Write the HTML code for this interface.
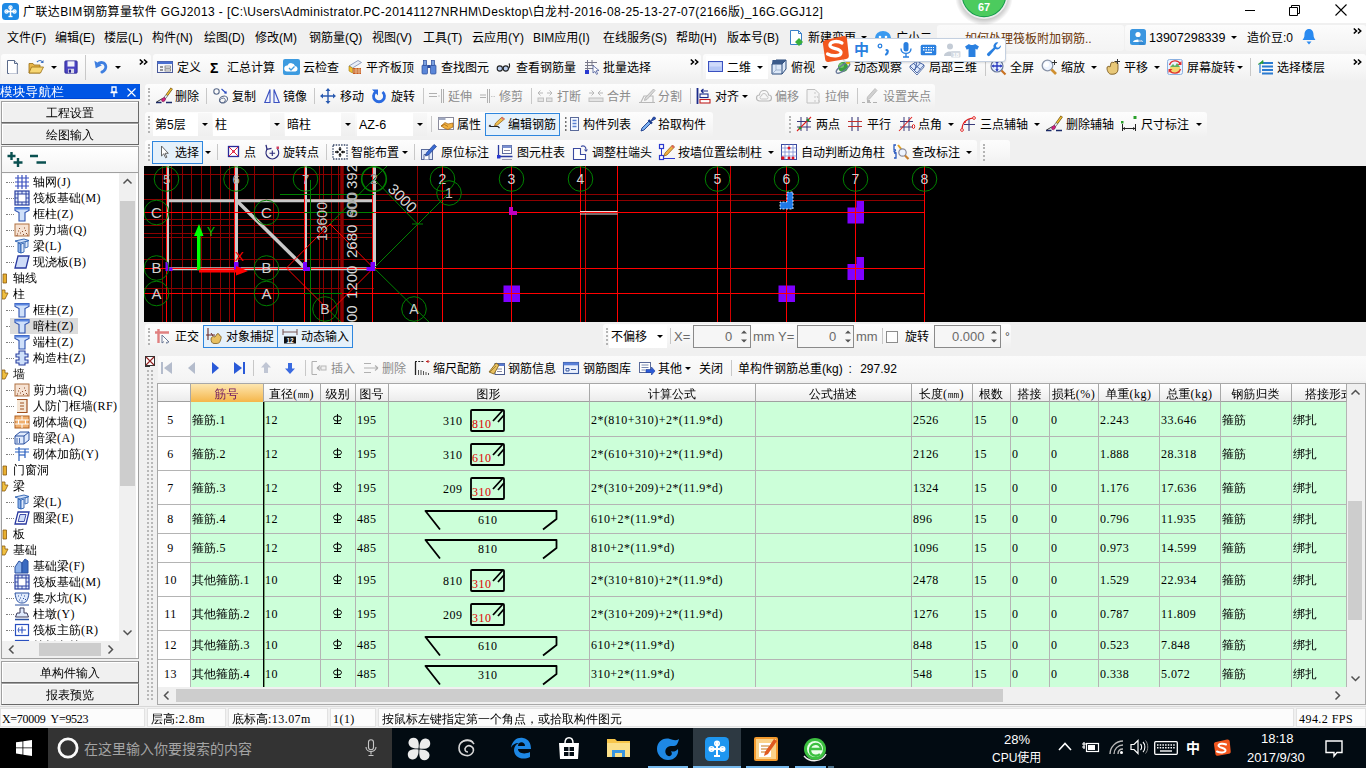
<!DOCTYPE html>
<html lang="zh-CN"><head><meta charset="utf-8"><title>GGJ2013</title>
<style>
html,body{margin:0;padding:0;width:1366px;height:768px;overflow:hidden;background:#f0f0f0;}
body{position:relative;font-family:"Liberation Sans","Noto Sans CJK SC",sans-serif;font-size:12px;color:#000;}
.a{position:absolute;}
.t{position:absolute;white-space:nowrap;line-height:16px;height:16px;font-size:12px;}
.s{position:absolute;white-space:nowrap;line-height:14px;height:14px;font-size:12px;font-family:"Liberation Serif","WenQuanYi Zen Hei","Noto Sans CJK SC",serif;}
.g{color:#8c8c8c;}
.l{letter-spacing:.45px;}
svg{position:absolute;overflow:visible;}
.tb{position:absolute;background:linear-gradient(#fdfdfd,#f7f7f7 55%,#f0f0f0);border-radius:3px;}
.sep{position:absolute;width:1px;background:#c8c8c8;}
.grip{position:absolute;width:2px;border-left:2px dotted #b4b4b4;}
.arr{position:absolute;width:0;height:0;border-left:3px solid transparent;border-right:3px solid transparent;border-top:3px solid #000;}
.btnsel{position:absolute;background:#e5f1fb;border:1px solid #2e86de;box-sizing:border-box;}
</style></head>
<body>
<div class="a" style="left:0px;top:0px;width:1366px;height:23px;background:#fff;"></div>
<svg style="left:2px;top:3px" width="17" height="17" viewBox="0 0 17 17"><rect x="0" y="0" width="17" height="17" rx="3.500" fill="#1e8ae6"/><path d="M8.500 3.500v10M3.500 8.500h10" stroke="#fff" stroke-width="1.500"/><circle cx="8.500" cy="4.500" r="1.600" fill="none" stroke="#fff" stroke-width="1.200"/><circle cx="4.500" cy="8.500" r="1.600" fill="none" stroke="#fff" stroke-width="1.200"/><circle cx="12.500" cy="8.500" r="1.600" fill="none" stroke="#fff" stroke-width="1.200"/><path d="M6.500 13.500h4" stroke="#fff" stroke-width="1.400"/></svg>
<span class="t" id="title" style="left:23px;top:3px;font-size:12px;line-height:18px;height:18px;letter-spacing:.4px">广联达BIM钢筋算量软件 GGJ2013 - [C:\Users\Administrator.PC-20141127NRHM\Desktop\白龙村-2016-08-25-13-27-07(2166版)_16G.GGJ12]</span>
<svg style="left:1240px;top:2px" width="120" height="18" viewBox="0 0 120 18"><path d="M5 8.500h10" stroke="#000" stroke-width="1"/><path d="M49.500 5.500h8v8h-8zM51.500 5.500v-2h8v8h-2" fill="none" stroke="#000" stroke-width="1"/><path d="M95.500 2.500l11 11M106.500 2.500l-11 11" stroke="#000" stroke-width="1.100"/></svg>
<div class="a" style="left:0px;top:23px;width:1366px;height:29px;background:#f0f0f0;"></div>
<span class="t" style="left:7px;top:30px;">文件(F)</span>
<span class="t" style="left:55px;top:30px;">编辑(E)</span>
<span class="t" style="left:104px;top:30px;">楼层(L)</span>
<span class="t" style="left:152px;top:30px;">构件(N)</span>
<span class="t" style="left:204px;top:30px;">绘图(D)</span>
<span class="t" style="left:255px;top:30px;">修改(M)</span>
<span class="t" style="left:309px;top:30px;">钢筋量(Q)</span>
<span class="t" style="left:372px;top:30px;">视图(V)</span>
<span class="t" style="left:423px;top:30px;">工具(T)</span>
<span class="t" style="left:472px;top:30px;">云应用(Y)</span>
<span class="t" style="left:533px;top:30px;">BIM应用(I)</span>
<span class="t" style="left:603px;top:30px;">在线服务(S)</span>
<span class="t" style="left:676px;top:30px;">帮助(H)</span>
<span class="t" style="left:727px;top:30px;">版本号(B)</span>
<svg style="left:789px;top:30px" width="16" height="16" viewBox="0 0 16 16"><path d="M1.500 .5h8l3 3v11h-11z" fill="#fff" stroke="#3a80c8"/><path d="M9.500 .5v3h3" fill="none" stroke="#3a80c8"/><path d="M10 8l4 4l-4 4l-4-4z" fill="#3ab03a"/></svg>
<span class="t" style="left:808px;top:30px;">新建变更</span>
<div class="arr" style="left:861px;top:36px;"></div>
<svg style="left:874px;top:30px" width="18" height="16" viewBox="0 0 18 16"><ellipse cx="9" cy="8" rx="8" ry="7" fill="#3a9af0"/><circle cx="6" cy="7" r="1.300" fill="#fff"/><circle cx="12" cy="7" r="1.300" fill="#fff"/></svg>
<span class="t" style="left:896px;top:30px;">广小二</span>
<div class="a" style="left:937px;top:25px;width:187px;height:26px;background:linear-gradient(#fafafa,#f4f4f4);border-radius:3px;"></div>
<span class="t" style="left:965px;top:31px;color:#6a3406;">如何处理筏板附加钢筋..</span>
<div class="a" style="left:1125px;top:25px;width:241px;height:26px;background:linear-gradient(#fcfcfc,#f3f3f3);border-radius:3px;"></div>
<svg style="left:1130px;top:29px" width="16" height="16" viewBox="0 0 16 16"><rect width="16" height="16" rx="2.500" fill="#3a96e0"/><circle cx="8" cy="5.500" r="2.600" fill="#fff"/><path d="M3 13c0-3.500 10-3.500 10 0z" fill="#fff"/><path d="M8 8.500l8 7.500H9z" fill="#2a78c0" opacity=".5"/></svg>
<span class="t" style="left:1149px;top:30px;font-size:12.500px;">13907298339</span>
<div class="arr" style="left:1231px;top:36px;"></div>
<span class="t" style="left:1247px;top:30px;">造价豆:0</span>
<svg style="left:1302px;top:29px" width="14" height="17" viewBox="0 0 14 17"><path d="M7 0c3 0 4.500 2.500 4.500 5.500c0 3 1 4 2 5.500H.5c1-1.500 2-2.500 2-5.500C2.500 2.500 4 0 7 0z" fill="#2a8af0"/><path d="M4.500 12.500h5l-2.500 3z" fill="#2a8af0"/></svg>
<svg style="left:1353px;top:28px" width="9" height="6" viewBox="0 0 9 6"><path d="M.8 .5L3.500 3L.8 5.500M5 .5L7.700 3L5 5.500" fill="none" stroke="#000" stroke-width="1.600"/></svg>
<div class="tb" style="left:1px;top:54px;width:150px;height:27px;"></div>
<svg style="left:5px;top:59px" width="16" height="16" viewBox="0 0 16 16"><path d="M2.5 1.5h7l3 3v10h-10z" fill="#fff" stroke="#5a6a8a"/><path d="M9.5 1.5v3h3" fill="#dfe6f2" stroke="#5a6a8a"/><path d="M12 6v8.5H4" fill="none" stroke="#c2c8d6"/></svg>
<svg style="left:28px;top:59px" width="16" height="16" viewBox="0 0 16 16"><path d="M1 4.5h4l1 1.5h6v8H1z" fill="#e8b64a" stroke="#9a6f14" stroke-width=".8"/><path d="M3.5 8h12l-3 6H1z" fill="#f7d774" stroke="#9a6f14" stroke-width=".8"/><path d="M9 3c2-2 4-2 5.5 0" fill="none" stroke="#3a6fc0" stroke-width="1.2"/><path d="M15.5 1v3h-3z" fill="#3a6fc0"/></svg>
<div class="arr" style="left:51px;top:66px;"></div>
<svg style="left:64px;top:60px" width="14" height="14" viewBox="0 0 16 16"><rect x="1" y="1" width="14" height="14" rx="1" fill="#4a43c2" stroke="#2b2790"/><rect x="4" y="1.5" width="8" height="6" fill="#f2f2fa"/><rect x="4.5" y="10" width="7" height="5" fill="#d6d6e8"/><rect x="5.5" y="11" width="2.5" height="3.5" fill="#2b2790"/></svg>
<div class="sep" style="left:85px;top:55px;height:25px"></div>
<svg style="left:94px;top:59px" width="14" height="14" viewBox="0 0 16 16"><path d="M4 6.500c2.500-4 9-3 9.500 2c.3 3-1.500 5-4.500 6.500" fill="none" stroke="#3f7fe0" stroke-width="3.200" stroke-linecap="round"/><path d="M.5 2l1.500 8.500l7-3.500z" fill="#3f7fe0"/></svg>
<div class="arr" style="left:115px;top:66px;"></div>
<svg style="left:139px;top:59px" width="9" height="6" viewBox="0 0 9 6"><path d="M.8 .5L3.500 3L.8 5.500M5 .5L7.700 3L5 5.500" fill="none" stroke="#000" stroke-width="1.600"/></svg>
<div class="tb" style="left:153px;top:54px;width:548px;height:27px;"></div>
<svg style="left:157px;top:59px" width="16" height="16" viewBox="0 0 16 16"><rect x=".5" y="2.500" width="15" height="11" fill="#f4f6fb" stroke="#4a5a9a"/><rect x=".5" y="2.500" width="15" height="2.500" fill="#4a6fd0"/><path d="M3 8h3M3 11h3" stroke="#333" stroke-width="1.200"/><rect x="8" y="7" width="5.500" height="2" fill="#fff" stroke="#666" stroke-width=".7"/><rect x="8" y="10" width="5.500" height="2" fill="#fff" stroke="#666" stroke-width=".7"/></svg><span class="t" style="left:177px;top:60px;">定义</span>
<span class="t" style="left:210px;top:60px;font-weight:bold;font-size:14px;">Σ</span>
<span class="t" style="left:227px;top:60px;">汇总计算</span>
<svg style="left:283px;top:59px" width="17" height="16" viewBox="0 0 17 16"><rect x="0" y="0" width="17" height="16" rx="2" fill="#3d9be0"/><path d="M4 12.500a3 3 0 0 1 .5-6a4 4 0 0 1 7.500.5a2.800 2.800 0 0 1 .5 5.500z" fill="#fff"/><path d="M6 9l2 2l3.500-3.500" fill="none" stroke="#3d9be0" stroke-width="1.300"/></svg>
<span class="t" style="left:303px;top:60px;">云检查</span>
<svg style="left:347px;top:59px" width="16" height="16" viewBox="0 0 16 16"><path d="M2 7l9-5.500l3.500 2L5.500 9z" fill="#e9eef8" stroke="#7a8ab0" stroke-width=".8"/><path d="M2 7l3.500 2V14L2 12z" fill="#f2c030" stroke="#a07810" stroke-width=".6"/><rect x="6" y="9" width="8" height="6" fill="#c85a20"/><path d="M6 11h8M6 13h8M9 9v6M12 9v6" stroke="#f4e0c0" stroke-width=".6"/></svg><span class="t" style="left:366px;top:60px;">平齐板顶</span>
<svg style="left:421px;top:59px" width="16" height="16" viewBox="0 0 16 16"><rect x="1" y="6" width="5.500" height="9" rx="1" fill="#5a86d8" stroke="#2a4a9a" stroke-width=".7"/><rect x="9.500" y="6" width="5.500" height="9" rx="1" fill="#5a86d8" stroke="#2a4a9a" stroke-width=".7"/><rect x="2.500" y="1.500" width="3" height="5" fill="#7aa0e0" stroke="#2a4a9a" stroke-width=".7"/><rect x="10.500" y="1.500" width="3" height="5" fill="#7aa0e0" stroke="#2a4a9a" stroke-width=".7"/><rect x="6.500" y="6" width="3" height="3" fill="#2a4a9a"/></svg><span class="t" style="left:441px;top:60px;">查找图元</span>
<svg style="left:496px;top:59px" width="16" height="16" viewBox="0 0 16 16"><circle cx="3.800" cy="9.500" r="2.600" fill="#bcd0f0" stroke="#222" stroke-width="1.100"/><circle cx="9.800" cy="9.500" r="2.600" fill="#bcd0f0" stroke="#222" stroke-width="1.100"/><path d="M6.400 9.500h.8M12.400 9.500c1.500-.5 1.500-4 .5-5" fill="none" stroke="#222" stroke-width="1.100"/></svg><span class="t" style="left:516px;top:60px;">查看钢筋量</span>
<svg style="left:584px;top:59px" width="16" height="16" viewBox="0 0 16 16"><path d="M1 3.500h12M1 6.500h9M1 9.500h8M3.500 1v11M8 1v6" stroke="#7a7a8a" stroke-width="1" fill="none"/><rect x="1" y="11" width="4" height="4" fill="#2a3ad0"/><path d="M9 6.500l6 5l-2.800.3l1.500 3l-1.200.6l-1.500-3L9 14z" fill="#fff" stroke="#4a5a9a" stroke-width=".8"/></svg><span class="t" style="left:603px;top:60px;">批量选择</span>
<svg style="left:690px;top:59px" width="9" height="6" viewBox="0 0 9 6"><path d="M.8 .5L3.500 3L.8 5.500M5 .5L7.700 3L5 5.500" fill="none" stroke="#000" stroke-width="1.600"/></svg>
<div class="tb" style="left:703px;top:54px;width:663px;height:27px;"></div>
<div class="a" style="left:706px;top:56px;width:62px;height:23px;background:#fff;"></div>
<svg style="left:708px;top:59px" width="16" height="16" viewBox="0 0 16 16"><rect x=".5" y="2.500" width="14" height="10" fill="#b4c6f6" stroke="#3a50c0"/><rect x="1.500" y="3.500" width="12" height="4" fill="#cfdafa"/></svg><span class="t" style="left:727px;top:60px;">二维</span>
<div class="arr" style="left:757px;top:66px;"></div>
<svg style="left:771px;top:59px" width="16" height="16" viewBox="0 0 16 16"><path d="M1 5l4-4h10v9l-4 5H1z" fill="#dce8f8" stroke="#2a4a7a"/><path d="M1 5h10v10M11 5l4-4" fill="none" stroke="#2a4a7a"/><path d="M1.500 1h13.500l-4 4H1z" fill="#3a5a8a"/><path d="M5 5.500v5.500h6M5 11l-3.500 3.500" stroke="#8aa0c0" stroke-width=".7" fill="none"/></svg><span class="t" style="left:791px;top:60px;">俯视</span>
<div class="arr" style="left:822px;top:66px;"></div>
<svg style="left:835px;top:59px" width="16" height="16" viewBox="0 0 16 16"><circle cx="8" cy="8" r="5" fill="#3aa040"/><circle cx="6.500" cy="6.500" r="2.500" fill="#7ad070" opacity=".8"/><ellipse cx="8" cy="9" rx="8" ry="2.800" transform="rotate(-35 8 9)" fill="none" stroke="#6a7a9a" stroke-width="1.300"/><circle cx="13" cy="3" r="2.300" fill="#e8c020"/></svg><span class="t" style="left:854px;top:60px;">动态观察</span>
<svg style="left:909px;top:59px" width="16" height="16" viewBox="0 0 16 16"><path d="M1 7l7-5l7 4l-7 8z" fill="#dfeafc" stroke="#3a5aa0" stroke-width=".9"/><path d="M4.500 4.500l7 6M8 2.500l-2 8.500M11.500 4l-6.500 7" stroke="#3a5aa0" stroke-width=".9" fill="none"/><path d="M1 7v2l7 7l7-8V6" fill="none" stroke="#3a5aa0" stroke-width=".8"/></svg><span class="t" style="left:929px;top:60px;">局部三维</span>
<div class="sep" style="left:985px;top:58px;height:18px"></div>
<svg style="left:990px;top:59px" width="16" height="16" viewBox="0 0 16 16"><circle cx="7" cy="7" r="6" fill="#e6f0ff" stroke="#6a7a9a" stroke-width="1.200"/><path d="M7 2.500v9M2.500 7h9" stroke="#2a3ac0" stroke-width="1.300"/><path d="M7 1.500l1.800 2.200H5.200zM7 12.500l1.800-2.200H5.200zM1.500 7l2.200-1.800v3.600zM12.500 7l-2.200-1.800v3.600z" fill="#2a3ac0"/><path d="M11.500 11.500l4 4" stroke="#c87020" stroke-width="2.200"/></svg><span class="t" style="left:1010px;top:60px;">全屏</span>
<svg style="left:1041px;top:59px" width="16" height="16" viewBox="0 0 16 16"><circle cx="6.500" cy="6.500" r="5.300" fill="#eef4ff" stroke="#8a94a8" stroke-width="1.300"/><circle cx="5.500" cy="5.500" r="2.500" fill="#fff"/><path d="M10.500 10.500l4.500 4.500" stroke="#d09030" stroke-width="2.600"/><path d="M13.500 1v5M11 3.500h5" stroke="#333" stroke-width="1"/></svg><span class="t" style="left:1061px;top:60px;">缩放</span>
<div class="arr" style="left:1091px;top:66px;"></div>
<svg style="left:1105px;top:59px" width="16" height="16" viewBox="0 0 16 16"><path d="M2 9c0-2 2-2 3-1l1-4c.5-1.200 2-1 2 0l1-1c1-.8 2 0 2 1c1-.5 2 .2 2 1.200v5c0 3-2 5-5 5H6c-2 0-4-3-4-6z" fill="#e8c878" stroke="#7a5a20" stroke-width=".9"/><path d="M12.500 0v5M10 2.500h5" stroke="#333" stroke-width="1"/></svg><span class="t" style="left:1124px;top:60px;">平移</span>
<div class="arr" style="left:1154px;top:66px;"></div>
<svg style="left:1167px;top:59px" width="16" height="16" viewBox="0 0 16 16"><rect x=".5" y=".5" width="15" height="15" rx="2" fill="#eaf3ff" stroke="#8ab0e0"/><rect x="3" y="8" width="10" height="6" fill="#f0d870"/><path d="M3 8l3-3l2 2l2-3l3 4z" fill="#60b060"/><path d="M2.500 6a6 6 0 0 1 11-1M13.500 10a6 6 0 0 1-11 1" fill="none" stroke="#e03030" stroke-width="1.400"/><path d="M14.500 2v4h-4zM1.500 14v-4h4z" fill="#e03030"/></svg><span class="t" style="left:1187px;top:60px;">屏幕旋转</span>
<div class="arr" style="left:1237px;top:66px;"></div>
<div class="sep" style="left:1250px;top:58px;height:18px"></div>
<svg style="left:1258px;top:59px" width="16" height="16" viewBox="0 0 16 16"><path d="M4 4h11M4 7.500h11M4 11h11M4 14.500h11" stroke="#2a7ad0" stroke-width="1.800"/><path d="M0 5.500l5-4v3" fill="#2a9a3a" stroke="#2a9a3a" stroke-width=".8"/><path d="M2 5v9" stroke="#2a7ad0" stroke-width="1.200"/></svg><span class="t" style="left:1277px;top:60px;">选择楼层</span>
<svg style="left:1353px;top:59px" width="9" height="6" viewBox="0 0 9 6"><path d="M.8 .5L3.500 3L.8 5.500M5 .5L7.700 3L5 5.500" fill="none" stroke="#000" stroke-width="1.600"/></svg>
<div class="tb" style="left:145px;top:84px;width:790px;height:25px;"></div>
<div class="grip" style="left:148px;top:88px;height:17px"></div>
<svg style="left:156px;top:88px" width="16" height="16" viewBox="0 0 16 16"><path d="M0 14.500h5.500M10 14.500h6" stroke="#1a2a6a" stroke-width="1.300"/><path d="M.5 14l6-3.500" stroke="#222" stroke-width=".9"/><path d="M15.800 .3L10.800 7.200" stroke="#6a4a10" stroke-width="2.600"/><path d="M15.600 .6L11 6.900" stroke="#f0c030" stroke-width="1.500"/><path d="M10.800 7.200L8.800 10" stroke="#555" stroke-width="2.600"/><path d="M10.700 7.400L9 9.800" stroke="#f4f4f4" stroke-width="1.500"/><ellipse cx="7.600" cy="11.600" rx="2.300" ry="1.700" transform="rotate(-50 7.600 11.600)" fill="#d02080" stroke="#601040" stroke-width=".5"/></svg><span class="t" style="left:175px;top:89px;">删除</span>
<div class="sep" style="left:206px;top:88px;height:16px"></div>
<svg style="left:213px;top:88px" width="16" height="16" viewBox="0 0 16 16"><circle cx="3.500" cy="3.500" r="2.700" fill="none" stroke="#5a6a8a" stroke-width="1.100"/><ellipse cx="10.500" cy="11.500" rx="4.200" ry="3.200" fill="none" stroke="#5a6a8a" stroke-width="1.100" transform="rotate(-25 10.500 11.500)"/><ellipse cx="9.500" cy="12.500" rx="3" ry="2.200" fill="none" stroke="#5a6a8a" stroke-width=".8" transform="rotate(-25 9.500 12.500)"/><path d="M8.500 1l4.500 4" stroke="#2a4ac0" stroke-width="1.100"/><path d="M13.800 5.800l-3-.5l2.500-2.500z" fill="#2a4ac0"/></svg><span class="t" style="left:232px;top:89px;">复制</span>
<svg style="left:264px;top:88px" width="16" height="16" viewBox="0 0 16 16"><path d="M6 1.500V14.500H.8zM10 1.500V14.500h5.200z" fill="#eef2ff" stroke="#3a50c0" stroke-width="1.100"/></svg><span class="t" style="left:283px;top:89px;">镜像</span>
<div class="sep" style="left:314px;top:88px;height:16px"></div>
<svg style="left:320px;top:88px" width="16" height="16" viewBox="0 0 16 16"><path d="M8 1v14M1 8h14" stroke="#2a5ab0" stroke-width="1.400"/><path d="M8 0l2.500 3h-5zM8 16l2.500-3h-5zM0 8l3-2.500v5zM16 8l-3-2.500v5z" fill="#2a5ab0"/></svg><span class="t" style="left:340px;top:89px;">移动</span>
<svg style="left:371px;top:88px" width="16" height="16" viewBox="0 0 16 16"><path d="M4.500 4a5.500 5.500 0 1 0 7 0" fill="none" stroke="#2a6ae0" stroke-width="2.800"/><path d="M1 1.500h6v6z" fill="#2a6ae0"/></svg><span class="t" style="left:391px;top:89px;">旋转</span>
<div class="sep" style="left:423px;top:88px;height:16px"></div>
<svg style="left:428px;top:88px" width="16" height="16" viewBox="0 0 16 16"><path d="M1 5.500h8M1 8.500h8" stroke="#b0b0b0" stroke-width="1.200"/><path d="M10 8h2" stroke="#c8c8c8"/><path d="M13.500 1v14M15.500 1v14" stroke="#b0b0b0" stroke-width="1"/></svg><span class="t" style="left:448px;top:89px;color:#8c8c8c;">延伸</span>
<svg style="left:480px;top:88px" width="16" height="16" viewBox="0 0 16 16"><path d="M0 7h6M0 9.500h6" stroke="#b0b0b0" stroke-width="1.200"/><path d="M7.500 1v14M9.500 1v14" stroke="#b0b0b0" stroke-width="1"/><path d="M11 8.500h4" stroke="#c8c8c8" stroke-dasharray="1.500 1"/></svg><span class="t" style="left:499px;top:89px;color:#8c8c8c;">修剪</span>
<div class="sep" style="left:531px;top:88px;height:16px"></div>
<svg style="left:537px;top:88px" width="16" height="16" viewBox="0 0 16 16"><path d="M1 5h5M10 5h5" stroke="#b8b8b8" stroke-width="1.200"/><path d="M1 5l2.500-2.500M1 5l2.500 2.500M15 5l-2.500-2.500M15 5l-2.500 2.500" stroke="#b8b8b8" stroke-width="1"/><rect x="1" y="10" width="5.500" height="3.500" fill="#e4e4e4" stroke="#c0c0c0"/><rect x="9.500" y="10" width="5.500" height="3.500" fill="#e4e4e4" stroke="#c0c0c0"/></svg><span class="t" style="left:557px;top:89px;color:#8c8c8c;">打断</span>
<svg style="left:588px;top:88px" width="16" height="16" viewBox="0 0 16 16"><path d="M1 5h4M11 5h4" stroke="#b8b8b8" stroke-width="1.200"/><path d="M6 5l-2.500-2.500M6 5l-2.500 2.500M10 5l2.500-2.500M10 5l2.500 2.500" stroke="#b8b8b8" stroke-width="1"/><rect x="1" y="10" width="14" height="3.500" fill="#e4e4e4" stroke="#c0c0c0"/></svg><span class="t" style="left:607px;top:89px;color:#8c8c8c;">合并</span>
<svg style="left:639px;top:88px" width="16" height="16" viewBox="0 0 16 16"><path d="M0 14.500h16M2 14l3-6h9v6" fill="none" stroke="#b8b8b8" stroke-width="1.100"/><path d="M14.500 1l1.500 1.500l-8 9l-2.500 1l.5-2.500z" fill="#d8d8d8" stroke="#b0b0b0" stroke-width=".8"/></svg><span class="t" style="left:658px;top:89px;color:#8c8c8c;">分割</span>
<div class="sep" style="left:690px;top:88px;height:16px"></div>
<svg style="left:696px;top:88px" width="16" height="16" viewBox="0 0 16 16"><path d="M1.500 0v16" stroke="#1a2a8a" stroke-width="1.800"/><rect x="4" y="6" width="8" height="3.500" fill="#fff" stroke="#1a2a8a" stroke-width="1.100"/><rect x="4" y="11.500" width="10" height="3.500" fill="#fff" stroke="#c02020" stroke-width="1.100"/><path d="M5 3h7M5 3l2.500-2M5 3l2.500 2" stroke="#1a2a8a" stroke-width="1.100" fill="none"/></svg><span class="t" style="left:715px;top:89px;">对齐</span>
<div class="arr" style="left:742px;top:95px;"></div>
<svg style="left:756px;top:88px" width="16" height="16" viewBox="0 0 16 16"><path d="M3.500 13a3 3 0 0 1 0-6a4.500 4.500 0 0 1 9 0a3 3 0 0 1 0 6z" fill="none" stroke="#b8b8b8" stroke-width="1.200"/><path d="M5.500 11a1.500 1.500 0 0 1 0-3a2.500 2.500 0 0 1 5 0a1.500 1.500 0 0 1 0 3z" fill="none" stroke="#c4c4c4" stroke-width="1"/></svg><span class="t" style="left:775px;top:89px;color:#8c8c8c;">偏移</span>
<svg style="left:806px;top:88px" width="16" height="16" viewBox="0 0 16 16"><path d="M1 1.500h8l4 4V15H1z" fill="#f4f4f4" stroke="#c0c0c0"/><path d="M9 4v2M9 8v2M9 12v2M11 8l1 2M12.500 12l1 2" stroke="#c8c8c8"/></svg><span class="t" style="left:825px;top:89px;color:#8c8c8c;">拉伸</span>
<div class="sep" style="left:857px;top:88px;height:16px"></div>
<svg style="left:862px;top:88px" width="16" height="16" viewBox="0 0 16 16"><path d="M13 .5l2 2l-7.500 8.500l-2.500.5l.5-2.500z" fill="#d0d0d0" stroke="#b8b8b8" stroke-width=".8"/><path d="M0 14.500h3M5 14.500h4M11 14.500h4" stroke="#b0b0b0" stroke-width="1.200"/><rect x="5" y="12" width="3" height="3" fill="#b8b8b8"/></svg><span class="t" style="left:883px;top:89px;color:#8c8c8c;">设置夹点</span>
<div class="tb" style="left:145px;top:112px;width:568px;height:25px;"></div>
<div class="grip" style="left:148px;top:116px;height:17px"></div>
<div class="a" style="left:153px;top:113px;width:59px;height:23px;background:#fff;"></div>
<div class="a" style="left:198px;top:113px;width:14px;height:23px;background:linear-gradient(#f8f8f8,#efefef);"></div>
<span class="t" style="left:155px;top:117px;">第5层</span>
<div class="arr" style="left:202px;top:123px;"></div>
<div class="a" style="left:213px;top:113px;width:70px;height:23px;background:#fff;"></div>
<div class="a" style="left:270px;top:113px;width:14px;height:23px;background:linear-gradient(#f8f8f8,#efefef);"></div>
<span class="t" style="left:215px;top:117px;">柱</span>
<div class="arr" style="left:274px;top:123px;"></div>
<div class="a" style="left:285px;top:113px;width:70px;height:23px;background:#fff;"></div>
<div class="a" style="left:341px;top:113px;width:14px;height:23px;background:linear-gradient(#f8f8f8,#efefef);"></div>
<span class="t" style="left:287px;top:117px;">暗柱</span>
<div class="arr" style="left:345px;top:123px;"></div>
<div class="a" style="left:357px;top:113px;width:70px;height:23px;background:#fff;"></div>
<div class="a" style="left:413px;top:113px;width:14px;height:23px;background:linear-gradient(#f8f8f8,#efefef);"></div>
<span class="t" style="left:359px;top:117px;font-size:12.500px;">AZ-6</span>
<div class="arr" style="left:417px;top:123px;"></div>
<div class="sep" style="left:431px;top:116px;height:16px"></div>
<svg style="left:438px;top:116px" width="16" height="16" viewBox="0 0 16 16"><rect x=".5" y="1.500" width="15" height="12" fill="#fff" stroke="#8a8a9a"/><rect x=".5" y="1.500" width="7" height="2.500" fill="#a0a8c0"/><path d="M3 10l4-3.500l3 1.500l5-1v4l-5 2.500l-3-1z" fill="#f0b040" stroke="#a06010" stroke-width=".7"/><path d="M3 10l3.500-1.500l3.500 2" fill="none" stroke="#a06010" stroke-width=".7"/></svg><span class="t" style="left:457px;top:117px;">属性</span>
<div class="btnsel" style="left:485px;top:113px;width:75px;height:23px;"></div>
<svg style="left:489px;top:116px" width="16" height="16" viewBox="0 0 16 16"><path d="M1 10.500h8l1.500 1.500" fill="none" stroke="#222" stroke-width="1.200"/><path d="M0 10.500l1.500-1.500" stroke="#222" stroke-width="1.200"/><path d="M13 1l2.500 2l-7 6l-3 1l1-2.800z" fill="#f0c050" stroke="#8a5a10" stroke-width=".7"/><path d="M13 1l2.500 2l-1.200 1l-2.500-2z" fill="#e07070"/></svg><span class="t" style="left:508px;top:117px;">编辑钢筋</span>
<svg style="left:564px;top:116px" width="16" height="16" viewBox="0 0 16 16"><rect x="6.500" y="1.500" width="8" height="13" fill="#f4f8ff" stroke="#5a6a9a"/><path d="M8.500 4.500h4M8.500 7.500h4M8.500 10.500h4" stroke="#5a80d0" stroke-width="1.300"/><path d="M1 2h3M1 6h3M1 10h3M1 14h3" stroke="#444" stroke-width="1.400" stroke-dasharray="1.500 1.500"/></svg><span class="t" style="left:583px;top:117px;">构件列表</span>
<svg style="left:640px;top:116px" width="16" height="16" viewBox="0 0 16 16"><path d="M1 15l1-3l7-7l2 2l-7 7z" fill="#7ab0f0" stroke="#1a3a8a" stroke-width=".9"/><path d="M8.500 4l3.500 3.500" stroke="#1a3a8a" stroke-width="2.200"/><path d="M10.500 5.500l3-4.500a1.800 1.800 0 0 1 2 2z" fill="#2a50b0" stroke="#1a3a8a" stroke-width=".8"/></svg><span class="t" style="left:658px;top:117px;">拾取构件</span>
<div class="tb" style="left:785px;top:112px;width:422px;height:25px;"></div>
<div class="grip" style="left:789px;top:116px;height:17px"></div>
<svg style="left:796px;top:116px" width="16" height="16" viewBox="0 0 16 16"><path d="M5 1v14M11 1v14M1 5.500h14M1 11h14" stroke="#3a3a7a" stroke-width="1"/><path d="M1 15L15 1" stroke="#e02020" stroke-width="1.100"/><circle cx="4" cy="12" r="1.500" fill="#2a8a2a"/><circle cx="12" cy="4" r="1.500" fill="#2a8a2a"/></svg><span class="t" style="left:816px;top:117px;">两点</span>
<svg style="left:847px;top:116px" width="16" height="16" viewBox="0 0 16 16"><path d="M5 1v14M11 1v14" stroke="#3a3a7a" stroke-width="1.100"/><path d="M1 5.500h14M1 10.500h14" stroke="#c03030" stroke-width="1.100"/></svg><span class="t" style="left:867px;top:117px;">平行</span>
<svg style="left:899px;top:116px" width="16" height="16" viewBox="0 0 16 16"><path d="M5 1v14M10 1v14M1 5.500h13M1 11h13" stroke="#3a3a7a" stroke-width="1"/><path d="M0 15L13 1" stroke="#e02020" stroke-width="1.100"/><ellipse cx="14.500" cy="10.500" rx="1.200" ry="2" fill="none" stroke="#e02020" stroke-width="1"/></svg><span class="t" style="left:918px;top:117px;">点角</span>
<div class="arr" style="left:948px;top:123px;"></div>
<svg style="left:960px;top:116px" width="16" height="16" viewBox="0 0 16 16"><path d="M9 3v12M4 8.500h11" stroke="#3a3a7a" stroke-width="1.100"/><path d="M2 13.500C2 7 6 3 13 2" fill="none" stroke="#e02020" stroke-width="1.100"/><circle cx="2" cy="14" r="1.400" fill="#fff" stroke="#e02020" stroke-width=".9"/><circle cx="14" cy="2" r="1.400" fill="#fff" stroke="#e02020" stroke-width=".9"/><circle cx="5" cy="6" r="1" fill="#e02020"/></svg><span class="t" style="left:980px;top:117px;">三点辅轴</span>
<div class="arr" style="left:1034px;top:123px;"></div>
<svg style="left:1046px;top:116px" width="16" height="16" viewBox="0 0 16 16"><path d="M0 14.500h5.500M10 14.500h6" stroke="#1a2a6a" stroke-width="1.300"/><path d="M.5 14l6-3.500" stroke="#222" stroke-width=".9"/><path d="M15.800 .3L10.800 7.200" stroke="#6a4a10" stroke-width="2.600"/><path d="M15.600 .6L11 6.900" stroke="#f0c030" stroke-width="1.500"/><path d="M10.800 7.200L8.800 10" stroke="#555" stroke-width="2.600"/><path d="M10.700 7.400L9 9.800" stroke="#f4f4f4" stroke-width="1.500"/><ellipse cx="7.600" cy="11.600" rx="2.300" ry="1.700" transform="rotate(-50 7.600 11.600)" fill="#d02080" stroke="#601040" stroke-width=".5"/></svg><span class="t" style="left:1066px;top:117px;">删除辅轴</span>
<svg style="left:1121px;top:116px" width="16" height="16" viewBox="0 0 16 16"><path d="M1.500 8v7M14.500 8v7M1.500 12.500h13" stroke="#222" stroke-width="1"/><path d="M1.500 12.500l2.500-1.500v3zM14.500 12.500l-2.500-1.500v3z" fill="#222"/><rect x="12.500" y="0" width="3" height="3" fill="#2aa02a"/><rect x="0" y="5" width="2.500" height="2.500" fill="#2aa02a"/></svg><span class="t" style="left:1141px;top:117px;">尺寸标注</span>
<div class="arr" style="left:1196px;top:123px;"></div>
<div class="tb" style="left:145px;top:140px;width:832px;height:25px;"></div>
<div class="tb" style="left:980px;top:140px;width:30px;height:25px;"></div>
<div class="grip" style="left:148px;top:144px;height:17px"></div>
<div class="btnsel" style="left:152px;top:141px;width:51px;height:23px;"></div>
<svg style="left:158px;top:144px" width="16" height="16" viewBox="0 0 16 16"><path d="M3.500 2v10l2.300-2.200l1.800 4l1.300-.6l-1.800-3.900h3.200z" fill="#fff" stroke="#555" stroke-width=".9"/></svg><span class="t" style="left:175px;top:145px;">选择</span>
<div class="arr" style="left:205px;top:151px;"></div>
<div class="sep" style="left:217px;top:144px;height:16px"></div>
<svg style="left:226px;top:144px" width="16" height="16" viewBox="0 0 16 16"><rect x="2.500" y="2.500" width="10" height="10" fill="#fff" stroke="#2a2a9a" stroke-width="1.300"/><path d="M3 3l9 9M12 3L3 12" stroke="#e02040" stroke-width="1"/><circle cx="7.500" cy="7.500" r="1.200" fill="#e02040"/></svg><span class="t" style="left:244px;top:145px;">点</span>
<svg style="left:264px;top:144px" width="16" height="16" viewBox="0 0 16 16"><path d="M3.200 5a6.300 6.300 0 1 0 10.300 0" fill="none" stroke="#2a2a7a" stroke-width="1.300"/><path d="M2 .8l1 4.500l4.500-1" fill="none" stroke="#2a2a7a" stroke-width="1.300"/><path d="M8.300 6.500v5.500M5.500 9.200h5.600" stroke="#2a2a7a" stroke-width="1.100"/><rect x="12.500" y="2.500" width="2.500" height="2.500" fill="#d04060"/></svg><span class="t" style="left:283px;top:145px;">旋转点</span>
<div class="sep" style="left:326px;top:144px;height:16px"></div>
<svg style="left:332px;top:144px" width="16" height="16" viewBox="0 0 16 16"><rect x="1" y="1" width="14" height="14" fill="#fff" stroke="#3a4a6a" stroke-dasharray="1.500 1.200" stroke-width="1.300"/><path d="M8 3v3.500M8 13V9.500M3 8h3.500M13 8H9.500" stroke="#111" stroke-width="1.300"/><path d="M8 7l-1.800-2.200h3.600zM8 9l-1.800 2.200h3.600zM7 8L4.800 6.200v3.600zM9 8l2.200-1.800v3.600z" fill="#111"/></svg><span class="t" style="left:351px;top:145px;">智能布置</span>
<div class="arr" style="left:402px;top:151px;"></div>
<div class="sep" style="left:414px;top:144px;height:16px"></div>
<svg style="left:421px;top:144px" width="16" height="16" viewBox="0 0 16 16"><rect x=".5" y="5.500" width="11" height="10" fill="#dfe8f8" stroke="#5a6a9a"/><path d="M3 15.500v-5h5v5" fill="#fff" stroke="#5a6a9a"/><path d="M13 .5l2.500 2l-8 8.500l-3 1l.8-3z" fill="#3a6ad0" stroke="#1a3a8a" stroke-width=".7"/></svg><span class="t" style="left:441px;top:145px;">原位标注</span>
<svg style="left:497px;top:144px" width="16" height="16" viewBox="0 0 16 16"><path d="M1.500 1v13M1.500 12.500h14" stroke="#2a3aa0" stroke-width="1.300"/><rect x="0" y="11" width="3.500" height="3.500" fill="#2a3ad0"/><rect x="5.500" y="1.500" width="9" height="8" fill="#fff" stroke="#5a6aa0"/><rect x="5.500" y="1.500" width="9" height="2.500" fill="#7a90d0"/><path d="M7 6.500h6" stroke="#8a8aa0"/><path d="M5 15.500h10" stroke="#9a9ab0"/></svg><span class="t" style="left:517px;top:145px;">图元柱表</span>
<svg style="left:572px;top:144px" width="16" height="16" viewBox="0 0 16 16"><path d="M1.500 4.500h7v6h5v5h-12z" fill="#fff" stroke="#3a4aa0" stroke-width="1.100"/><path d="M9 2.500c2.500-1.500 5 0 5 3" fill="none" stroke="#3a4aa0" stroke-width="1.100"/><path d="M12 5.500h4l-2 2.500z" fill="#3a4aa0"/></svg><span class="t" style="left:592px;top:145px;">调整柱端头</span>
<svg style="left:659px;top:144px" width="16" height="16" viewBox="0 0 16 16"><rect x=".5" y=".5" width="4" height="4" fill="#fff" stroke="#2a3ad0" stroke-width="1.200"/><rect x=".5" y="11.500" width="4" height="4" fill="#fff" stroke="#2a3ad0" stroke-width="1.200"/><path d="M2.500 5v6M5 14.500h11" stroke="#2a3ad0" stroke-width="1"/><path d="M13.500 1l2 2l-7.500 8l-3 1l1-3z" fill="#f0b040" stroke="#8a5a10" stroke-width=".7"/><path d="M13.500 1l2 2l-1.200 1.200l-2-2z" fill="#e06060"/></svg><span class="t" style="left:678px;top:145px;">按墙位置绘制柱</span>
<div class="arr" style="left:768px;top:151px;"></div>
<svg style="left:781px;top:144px" width="16" height="16" viewBox="0 0 16 16"><rect x=".5" y=".5" width="15" height="15" fill="#fff" stroke="#3a4aa0"/><path d="M4 .5v15M8 .5v15M12 .5v15M.5 4h15M.5 8h15M.5 12h15" stroke="#7a8ad0" stroke-width=".8"/><circle cx="8" cy="4" r="1.500" fill="#e01020"/><circle cx="1.800" cy="14" r="1.800" fill="#e01020"/><circle cx="8" cy="14" r="1.500" fill="#e01020"/><circle cx="12" cy="14" r="1.500" fill="#e01020"/></svg><span class="t" style="left:801px;top:145px;">自动判断边角柱</span>
<svg style="left:893px;top:144px" width="16" height="16" viewBox="0 0 16 16"><path d="M3 1H1v5h2M1 9h2v5H1" fill="none" stroke="#2a5ac0" stroke-width="1.300"/><path d="M3 6.500l-2 1.200l2 1.200" fill="none" stroke="#2a5ac0" stroke-width="1.100"/><path d="M5 1l4 5" stroke="#e0a020" stroke-width="2"/><circle cx="9.500" cy="8.500" r="3.700" fill="#eef4ff" stroke="#8a8a9a" stroke-width="1.200"/><path d="M12 11.500l3.500 3.500" stroke="#c88030" stroke-width="2.200"/></svg><span class="t" style="left:912px;top:145px;">查改标注</span>
<div class="arr" style="left:966px;top:151px;"></div>
<div class="grip" style="left:983px;top:144px;height:17px"></div>
<div class="a" style="left:843px;top:38px;width:163px;height:24px;background:#fff;border:1px solid #c4d0e0;border-radius:3px;box-sizing:border-box;box-shadow:0 1px 2px rgba(0,0,0,.12);"></div>
<svg style="left:820.500px;top:33.500px" width="28" height="30" viewBox="0 0 30 30" preserveAspectRatio="none"><path d="M5 6l19-4c2-.4 3.500.8 3.800 2.500l2 17c.2 2-1 3.200-2.800 3.500l-19 3c-2 .3-3.300-.8-3.500-2.500L2 9.500C1.800 7.500 3 6.400 5 6z" fill="#f2571f"/><path d="M22.500 9c-4-2.200-12.500-2.200-13 2c-.5 4.200 12.500 3 12 7.500c-.4 4.200-9.500 4-14.500 1.500" fill="none" stroke="#fff" stroke-width="3.400" stroke-linecap="round"/></svg>
<span class="t" style="left:854px;top:42px;color:#2a80e0;font-weight:bold;font-size:15px;line-height:16px;">中</span>
<svg style="left:877px;top:42px" width="16" height="16" viewBox="0 0 16 16"><circle cx="3" cy="4" r="1.800" fill="none" stroke="#2a80e0" stroke-width="1.300"/><path d="M9.500 8c1.500 0 2 2.500-.5 4.500" fill="none" stroke="#2a80e0" stroke-width="2.200" stroke-linecap="round"/></svg>
<svg style="left:900px;top:42px" width="12" height="16" viewBox="0 0 12 16"><rect x="3.500" y="0" width="5" height="9.500" rx="2.500" fill="#2a80e0"/><path d="M1 6.500c0 6.500 10 6.500 10 0M6 11.500v3M3 15h6" fill="none" stroke="#2a80e0" stroke-width="1.400"/></svg>
<svg style="left:920px;top:44px" width="17" height="12" viewBox="0 0 17 12"><rect x=".7" y=".7" width="15.600" height="10.600" rx="1.500" fill="#2a80e0"/><path d="M3 3.500h11M3 5.800h11" stroke="#fff" stroke-width="1.200" stroke-dasharray="1.500 1"/><path d="M5 8.500h7" stroke="#fff" stroke-width="1.300"/></svg>
<svg style="left:944px;top:43px" width="17" height="15" viewBox="0 0 17 15"><circle cx="6" cy="3.500" r="3" fill="#c4ccd6"/><path d="M0 13c0-6 12-6 12 0z" fill="#c4ccd6"/><rect x="7" y="8" width="9.500" height="6.500" rx="1" fill="#d4dae2"/><text x="11.800" y="13.500" font-size="6" font-weight="bold" text-anchor="middle" fill="#fff" font-family="Liberation Sans,sans-serif">18</text></svg>
<svg style="left:965px;top:44px" width="14" height="13" viewBox="0 0 16 15"><path d="M4.500 0c1.500 1.500 5.500 1.500 7 0l4.500 3l-2 3.500l-2-1V15H4V5.500l-2 1L0 3z" fill="#2a80e0"/></svg>
<svg style="left:987px;top:42px" width="15" height="15" viewBox="0 0 16 16"><path d="M15 3.500a4.300 4.300 0 0 1-6 4L3 14.500a1.700 1.700 0 0 1-2.500-2.500l6.500-6a4.300 4.300 0 0 1 5-5.500L9.500 3.500l.5 2l2 .5z" fill="#2a80e0"/></svg>
<svg style="left:953.5px;top:-35px" width="60" height="60" viewBox="0 0 60 60"><defs><radialGradient id="bsh"><stop offset="0.78" stop-color="#000" stop-opacity=".22"/><stop offset="1" stop-color="#000" stop-opacity="0"/></radialGradient></defs><circle cx="30" cy="31.500" r="29" fill="url(#bsh)"/><circle cx="30" cy="30" r="24" fill="#ececec"/><circle cx="30" cy="30" r="22.300" fill="#12994a"/><circle cx="30" cy="30" r="21.300" fill="#4ccb5e"/><text x="30" y="45.800" text-anchor="middle" font-family="Liberation Sans,sans-serif" font-weight="bold" font-size="11" fill="#fff">67</text></svg>
<div class="a" style="left:0px;top:84px;width:140px;height:15px;background:#0055e4;border-bottom:1px solid #0046d4;box-sizing:border-box;"></div>
<span class="s" style="left:0px;top:85px;color:#fff;font-size:12.500px;letter-spacing:.3px;">模块导航栏</span>
<svg style="left:109px;top:86px" width="10" height="12" viewBox="0 0 10 12"><path d="M3 1h4v5H3zM1.500 6.500h7M5 6.500V11" fill="none" stroke="#fff" stroke-width="1.300"/></svg>
<svg style="left:127px;top:88px" width="9" height="9" viewBox="0 0 9 9"><path d="M.5.500l8 8M8.500.500l-8 8" stroke="#fff" stroke-width="1.100"/></svg>
<div class="a" style="left:1px;top:101px;width:138px;height:22px;background:#f0f0f0;border:1px solid #a0a0a0;border-right-color:#696969;border-bottom-color:#696969;box-sizing:border-box;box-shadow:inset 1px 1px 0 #fff;"></div>
<span class="s" style="left:46px;top:106px;">工程设置</span>
<div class="a" style="left:1px;top:123px;width:138px;height:22px;background:#f0f0f0;border:1px solid #a0a0a0;border-right-color:#696969;border-bottom-color:#696969;box-sizing:border-box;box-shadow:inset 1px 1px 0 #fff;"></div>
<span class="s" style="left:46px;top:128px;">绘图输入</span>
<div class="a" style="left:1px;top:661px;width:138px;height:22px;background:#f0f0f0;border:1px solid #a0a0a0;border-right-color:#696969;border-bottom-color:#696969;box-sizing:border-box;box-shadow:inset 1px 1px 0 #fff;"></div>
<span class="s" style="left:40px;top:666px;">单构件输入</span>
<div class="a" style="left:1px;top:683px;width:138px;height:22px;background:#f0f0f0;border:1px solid #a0a0a0;border-right-color:#696969;border-bottom-color:#696969;box-sizing:border-box;box-shadow:inset 1px 1px 0 #fff;"></div>
<span class="s" style="left:46px;top:688px;">报表预览</span>
<div class="a" style="left:1px;top:146px;width:138px;height:513px;background:linear-gradient(#fff,#f4f4f4 26px,#fff 27px);border:1px solid #a0a0a0;box-sizing:border-box;"></div>
<svg style="left:7px;top:151px" width="40" height="18" viewBox="0 0 40 18"><path d="M4.500 1v8M.5 5h8M11 7v9M6.500 11.500h9" stroke="#0a5050" stroke-width="2.400"/><path d="M23 5h8M29.500 11.500h9.500" stroke="#0a5050" stroke-width="2.400"/></svg>
<div class="a" style="left:2px;top:172px;width:136px;height:1px;background:#a0a0a0;"></div>
<div class="a" style="left:2px;top:173px;width:117px;height:468px;overflow:hidden;"><div class="a" style="left:4px;top:9px;width:8px;border-top:1px dotted #808080"></div><svg style="left:12px;top:1px" width="16" height="16" viewBox="0 0 16 16"><path d="M4 1v14M8 1v14M12 1v14M1 4h14M1 8h14M1 12h14" stroke="#3a50c0" stroke-width="1.200"/></svg><span class="s" style="left:31px;top:2px;">轴网<span class="l">(J)</span></span><div class="a" style="left:4px;top:25px;width:8px;border-top:1px dotted #808080"></div><svg style="left:12px;top:17px" width="16" height="16" viewBox="0 0 16 16"><rect x="1" y="1" width="14" height="14" fill="#dfe8fa" stroke="#2a40a0" stroke-width="1.200"/><rect x="4" y="4" width="8" height="8" fill="#fff" stroke="#2a40a0" stroke-width="1"/><path d="M1 4h3M1 8h3M1 12h3M12 4h3M12 8h3M12 12h3M4 1v3M8 1v3M12 1v3M4 12v3M8 12v3M12 12v3" stroke="#2a40a0" stroke-width=".9"/></svg><span class="s" style="left:31px;top:18px;">筏板基础<span class="l">(M)</span></span><div class="a" style="left:4px;top:41px;width:8px;border-top:1px dotted #808080"></div><svg style="left:12px;top:33px" width="16" height="16" viewBox="0 0 16 16"><path d="M1 1.500h14v3l-4 2V15H5V6.500l-4-2z" fill="#cfe0fa" stroke="#2a50b0" stroke-width="1.100"/><path d="M1 1.500h14v2H1z" fill="#5a86e0"/></svg><span class="s" style="left:31px;top:34px;">框柱<span class="l">(Z)</span></span><div class="a" style="left:4px;top:57px;width:8px;border-top:1px dotted #808080"></div><svg style="left:12px;top:49px" width="16" height="16" viewBox="0 0 16 16"><rect x="1" y="2" width="14" height="12" fill="#f6e2d2" stroke="#b07040" stroke-width="1"/><path d="M3 12h1M6 11h1M9 12.500h1M12 11.500h1M4 9h1M8 9.500h1M11 8.500h1M5 6.500h1M10 6h1M13 13h1M2.500 13.500h1" stroke="#8a4a2a" stroke-width="1"/></svg><span class="s" style="left:31px;top:50px;">剪力墙<span class="l">(Q)</span></span><div class="a" style="left:4px;top:73px;width:8px;border-top:1px dotted #808080"></div><svg style="left:12px;top:65px" width="16" height="16" viewBox="0 0 16 16"><path d="M1 3l9-2l5 1.500l-9 2.500z" fill="#cfe0fa" stroke="#2a60b0" stroke-width=".9"/><path d="M4 5l3 1v9l-3-1z" fill="#8ab0ea" stroke="#2a60b0" stroke-width=".9"/><path d="M7 6l3-1v9l-3 1z" fill="#dfeafc" stroke="#2a60b0" stroke-width=".9"/><path d="M11 4l3-1v6l-3 1z" fill="#dfeafc" stroke="#2a60b0" stroke-width=".8"/></svg><span class="s" style="left:31px;top:66px;">梁<span class="l">(L)</span></span><div class="a" style="left:4px;top:89px;width:8px;border-top:1px dotted #808080"></div><svg style="left:12px;top:81px" width="16" height="16" viewBox="0 0 16 16"><path d="M4 2h11l-3 12H1z" fill="#cfdcf8" stroke="#2a3aa0" stroke-width="1.300"/></svg><span class="s" style="left:31px;top:82px;">现浇板<span class="l">(B)</span></span><svg style="left:-5px;top:97px" width="12" height="16" viewBox="0 0 12 16"><path d="M6 4h3.500v9H6z" fill="#e8b030" stroke="#8a5a10" stroke-width=".8"/></svg><span class="s" style="left:11px;top:98px;">轴线</span><svg style="left:-5px;top:113px" width="12" height="16" viewBox="0 0 12 16"><path d="M5 4h3v3h3l-3 6H5z" fill="#f0c040" stroke="#8a5a10" stroke-width=".8"/></svg><span class="s" style="left:11px;top:114px;">柱</span><div class="a" style="left:4px;top:137px;width:8px;border-top:1px dotted #808080"></div><svg style="left:12px;top:129px" width="16" height="16" viewBox="0 0 16 16"><path d="M1 1.500h14v3l-4 2V15H5V6.500l-4-2z" fill="#cfe0fa" stroke="#2a50b0" stroke-width="1.100"/><path d="M1 1.500h14v2H1z" fill="#5a86e0"/></svg><span class="s" style="left:31px;top:130px;">框柱<span class="l">(Z)</span></span><div class="a" style="left:4px;top:153px;width:8px;border-top:1px dotted #808080"></div><div class="a" style="left:8px;top:145px;width:68px;height:16px;background:#dcdcdc;"></div><svg style="left:12px;top:145px" width="16" height="16" viewBox="0 0 16 16"><path d="M1 1.500h14v3l-4 2V15H5V6.500l-4-2z" fill="#cfe0fa" stroke="#2a50b0" stroke-width="1.100"/><path d="M1 1.500h14v2H1z" fill="#5a86e0"/></svg><span class="s" style="left:31px;top:146px;">暗柱<span class="l">(Z)</span></span><div class="a" style="left:4px;top:169px;width:8px;border-top:1px dotted #808080"></div><svg style="left:12px;top:161px" width="16" height="16" viewBox="0 0 16 16"><path d="M1 1.500h14v3l-4 2V15H5V6.500l-4-2z" fill="#cfe0fa" stroke="#2a50b0" stroke-width="1.100"/><path d="M1 1.500h14v2H1z" fill="#5a86e0"/></svg><span class="s" style="left:31px;top:162px;">端柱<span class="l">(Z)</span></span><div class="a" style="left:4px;top:185px;width:8px;border-top:1px dotted #808080"></div><svg style="left:12px;top:177px" width="16" height="16" viewBox="0 0 16 16"><path d="M5 1h6v3h3v3h-3v3h3v3h-3v2H5v-2H2v-3h3V7H2V4h3z" fill="#cfe0fa" stroke="#2a40a0" stroke-width="1.100"/></svg><span class="s" style="left:31px;top:178px;">构造柱<span class="l">(Z)</span></span><svg style="left:-5px;top:193px" width="12" height="16" viewBox="0 0 12 16"><path d="M5 4h3v3h3l-3 6H5z" fill="#f0c040" stroke="#8a5a10" stroke-width=".8"/></svg><span class="s" style="left:11px;top:194px;">墙</span><div class="a" style="left:4px;top:217px;width:8px;border-top:1px dotted #808080"></div><svg style="left:12px;top:209px" width="16" height="16" viewBox="0 0 16 16"><rect x="1" y="2" width="14" height="12" fill="#f6e2d2" stroke="#b07040" stroke-width="1"/><path d="M3 12h1M6 11h1M9 12.500h1M12 11.500h1M4 9h1M8 9.500h1M11 8.500h1M5 6.500h1M10 6h1M13 13h1M2.500 13.500h1" stroke="#8a4a2a" stroke-width="1"/></svg><span class="s" style="left:31px;top:210px;">剪力墙<span class="l">(Q)</span></span><div class="a" style="left:4px;top:233px;width:8px;border-top:1px dotted #808080"></div><svg style="left:12px;top:225px" width="16" height="16" viewBox="0 0 16 16"><path d="M3 1.500h10v13H3" fill="#f6e8d8" stroke="#a05020" stroke-width="1.200"/><path d="M6 5h4M6 8h4M6 11h4" stroke="#a05020" stroke-width="1.100"/></svg><span class="s" style="left:31px;top:226px;">人防门框墙<span class="l">(RF)</span></span><div class="a" style="left:4px;top:249px;width:8px;border-top:1px dotted #808080"></div><svg style="left:12px;top:241px" width="16" height="16" viewBox="0 0 16 16"><rect x="1" y="2" width="14" height="12" fill="#f0b070" stroke="#b06020" stroke-width="1"/><path d="M1 6h14M1 10h14M8 2v4M4.500 6v4M11.500 6v4M8 10v4" stroke="#fff" stroke-width="1"/></svg><span class="s" style="left:31px;top:242px;">砌体墙<span class="l">(Q)</span></span><div class="a" style="left:4px;top:265px;width:8px;border-top:1px dotted #808080"></div><svg style="left:12px;top:257px" width="16" height="16" viewBox="0 0 16 16"><path d="M1 6l5-4h9v8l-5 4H1z" fill="#dfeafc" stroke="#2a50a0" stroke-width="1"/><path d="M1 6h9v8M10 6l5-4" fill="none" stroke="#2a50a0" stroke-width="1"/><path d="M3 8v5M5.500 8v5" stroke="#2a50a0" stroke-width=".8"/></svg><span class="s" style="left:31px;top:258px;">暗梁<span class="l">(A)</span></span><div class="a" style="left:4px;top:281px;width:8px;border-top:1px dotted #808080"></div><svg style="left:12px;top:273px" width="16" height="16" viewBox="0 0 16 16"><path d="M1 3h14M1 6h14M5 1v14M11 3v9" stroke="#2a60c0" stroke-width="1.200" fill="none"/><path d="M5 9h6" stroke="#2a60c0" stroke-width="1.200"/></svg><span class="s" style="left:31px;top:274px;">砌体加筋<span class="l">(Y)</span></span><svg style="left:-5px;top:289px" width="12" height="16" viewBox="0 0 12 16"><path d="M6 4h3.500v9H6z" fill="#e8b030" stroke="#8a5a10" stroke-width=".8"/></svg><span class="s" style="left:11px;top:290px;">门窗洞</span><svg style="left:-5px;top:305px" width="12" height="16" viewBox="0 0 12 16"><path d="M5 4h3v3h3l-3 6H5z" fill="#f0c040" stroke="#8a5a10" stroke-width=".8"/></svg><span class="s" style="left:11px;top:306px;">梁</span><div class="a" style="left:4px;top:329px;width:8px;border-top:1px dotted #808080"></div><svg style="left:12px;top:321px" width="16" height="16" viewBox="0 0 16 16"><path d="M1 3l9-2l5 1.500l-9 2.500z" fill="#cfe0fa" stroke="#2a60b0" stroke-width=".9"/><path d="M4 5l3 1v9l-3-1z" fill="#8ab0ea" stroke="#2a60b0" stroke-width=".9"/><path d="M7 6l3-1v9l-3 1z" fill="#dfeafc" stroke="#2a60b0" stroke-width=".9"/><path d="M11 4l3-1v6l-3 1z" fill="#dfeafc" stroke="#2a60b0" stroke-width=".8"/></svg><span class="s" style="left:31px;top:322px;">梁<span class="l">(L)</span></span><div class="a" style="left:4px;top:345px;width:8px;border-top:1px dotted #808080"></div><svg style="left:12px;top:337px" width="16" height="16" viewBox="0 0 16 16"><path d="M4 2h11l-3 12H1z" fill="#fff" stroke="#2a3aa0" stroke-width="1.300"/><path d="M6 4.500h6l-1.800 7H4.200z" fill="#cfdcf8" stroke="#2a3aa0" stroke-width=".9"/></svg><span class="s" style="left:31px;top:338px;">圈梁<span class="l">(E)</span></span><svg style="left:-5px;top:353px" width="12" height="16" viewBox="0 0 12 16"><path d="M6 4h3.500v9H6z" fill="#e8b030" stroke="#8a5a10" stroke-width=".8"/></svg><span class="s" style="left:11px;top:354px;">板</span><svg style="left:-5px;top:369px" width="12" height="16" viewBox="0 0 12 16"><path d="M5 4h3v3h3l-3 6H5z" fill="#f0c040" stroke="#8a5a10" stroke-width=".8"/></svg><span class="s" style="left:11px;top:370px;">基础</span><div class="a" style="left:4px;top:393px;width:8px;border-top:1px dotted #808080"></div><svg style="left:12px;top:385px" width="16" height="16" viewBox="0 0 16 16"><path d="M1 15V9l4-6l3 2v10z" fill="#8ab0ea" stroke="#2a50a0" stroke-width="1"/><path d="M8 5l3-4l3 2v12H8z" fill="#3a6ac0" stroke="#2a50a0" stroke-width="1"/></svg><span class="s" style="left:31px;top:386px;">基础梁<span class="l">(F)</span></span><div class="a" style="left:4px;top:409px;width:8px;border-top:1px dotted #808080"></div><svg style="left:12px;top:401px" width="16" height="16" viewBox="0 0 16 16"><rect x="1" y="1" width="14" height="14" fill="#dfe8fa" stroke="#2a40a0" stroke-width="1.200"/><rect x="4" y="4" width="8" height="8" fill="#fff" stroke="#2a40a0" stroke-width="1"/><path d="M1 4h3M1 8h3M1 12h3M12 4h3M12 8h3M12 12h3M4 1v3M8 1v3M12 1v3M4 12v3M8 12v3M12 12v3" stroke="#2a40a0" stroke-width=".9"/></svg><span class="s" style="left:31px;top:402px;">筏板基础<span class="l">(M)</span></span><div class="a" style="left:4px;top:425px;width:8px;border-top:1px dotted #808080"></div><svg style="left:12px;top:417px" width="16" height="16" viewBox="0 0 16 16"><path d="M1 3h14M1 3c1 8 3 10 7 10s6-2 7-10" fill="#dfeafc" stroke="#2a50a0" stroke-width="1"/><path d="M4 6h1M7 5h1M10 6h1M6 8h1M9 8.500h1M7.500 11h1M5 10h1M11 9.500h1" stroke="#2a50a0" stroke-width="1"/><path d="M1 15h14" stroke="#2a50a0"/></svg><span class="s" style="left:31px;top:418px;">集水坑<span class="l">(K)</span></span><div class="a" style="left:4px;top:441px;width:8px;border-top:1px dotted #808080"></div><svg style="left:12px;top:433px" width="16" height="16" viewBox="0 0 16 16"><path d="M6 2h4v5h3l1.500 4h-13L3 7h3z" fill="#dfeafc" stroke="#3a3a5a" stroke-width="1"/><path d="M1 13.500h14" stroke="#2a50a0" stroke-width="1.500"/></svg><span class="s" style="left:31px;top:434px;">柱墩<span class="l">(Y)</span></span><div class="a" style="left:4px;top:457px;width:8px;border-top:1px dotted #808080"></div><svg style="left:12px;top:449px" width="16" height="16" viewBox="0 0 16 16"><rect x="1.500" y="2.500" width="13" height="11" fill="#fff" stroke="#2a50c0" stroke-width="1.200"/><path d="M8 4.500v7M4 8h8" stroke="#2a50c0" stroke-width="1.100"/><path d="M5 5.500L4 8l1 2.500" fill="none" stroke="#2a50c0" stroke-width=".9"/></svg><span class="s" style="left:31px;top:450px;">筏板主筋<span class="l">(R)</span></span><div class="a" style="left:4px;top:473px;width:8px;border-top:1px dotted #808080"></div><svg style="left:12px;top:465px" width="16" height="16" viewBox="0 0 16 16"><rect x="1.500" y="2.500" width="13" height="11" fill="#fff" stroke="#2a50c0" stroke-width="1.200"/><path d="M8 4.500v7M4 8h8" stroke="#2a50c0" stroke-width="1.100"/><path d="M5 5.500L4 8l1 2.500" fill="none" stroke="#2a50c0" stroke-width=".9"/></svg><span class="s" style="left:31px;top:466px;">筏板负筋<span class="l">(X)</span></span></div>
<div class="a" style="left:119px;top:173px;width:17px;height:468px;background:#f0f0f0;"></div>
<div class="a" style="left:120px;top:201px;width:15px;height:285px;background:#cdcdcd;"></div>
<svg style="left:123px;top:178px" width="9" height="6" viewBox="0 0 9 6"><path d="M.5 5.500l4-4l4 4" fill="none" stroke="#505050" stroke-width="1.500"/></svg>
<svg style="left:123px;top:630px" width="9" height="6" viewBox="0 0 9 6"><path d="M.5 .5l4 4l4-4" fill="none" stroke="#505050" stroke-width="1.500"/></svg>
<div class="a" style="left:2px;top:641px;width:134px;height:17px;background:#f0f0f0;"></div>
<div class="a" style="left:39px;top:643px;width:62px;height:13px;background:#cdcdcd;"></div>
<svg style="left:8px;top:645px" width="6" height="9" viewBox="0 0 6 9"><path d="M5.500 .5l-4 4l4 4" fill="none" stroke="#505050" stroke-width="1.500"/></svg>
<svg style="left:108px;top:645px" width="6" height="9" viewBox="0 0 6 9"><path d="M.5 .5l4 4l-4 4" fill="none" stroke="#505050" stroke-width="1.500"/></svg>
<svg style="left:144px;top:166px;background:#000;overflow:hidden" width="1222" height="156" viewBox="0 0 1222 156" font-family="Liberation Sans,sans-serif"><path d="M18.5 0.0L18.5 156.0" stroke="#8c0000" stroke-width="1"/><path d="M27.5 0.0L27.5 156.0" stroke="#8c0000" stroke-width="1"/><path d="M38.5 0.0L38.5 156.0" stroke="#8c0000" stroke-width="1"/><path d="M47.5 0.0L47.5 156.0" stroke="#8c0000" stroke-width="1"/><path d="M57.5 0.0L57.5 156.0" stroke="#8c0000" stroke-width="1"/><path d="M66.5 0.0L66.5 156.0" stroke="#8c0000" stroke-width="1"/><path d="M76.5 0.0L76.5 156.0" stroke="#8c0000" stroke-width="1"/><path d="M85.5 0.0L85.5 156.0" stroke="#8c0000" stroke-width="1"/><path d="M110.5 0.0L110.5 156.0" stroke="#8c0000" stroke-width="1"/><path d="M129.5 0.0L129.5 156.0" stroke="#8c0000" stroke-width="1"/><path d="M175.5 0.0L175.5 156.0" stroke="#8c0000" stroke-width="1"/><path d="M179.5 0.0L179.5 156.0" stroke="#8c0000" stroke-width="1"/><path d="M187.5 0.0L187.5 156.0" stroke="#8c0000" stroke-width="1"/><path d="M194.5 0.0L194.5 156.0" stroke="#8c0000" stroke-width="1"/><path d="M198.0 0.0L198.0 156.0" stroke="#8c0000" stroke-width="3.5"/><path d="M273.5 0.0L273.5 156.0" stroke="#8c0000" stroke-width="1"/><path d="M0.0 8.5L230.0 8.5" stroke="#8c0000" stroke-width="1"/><path d="M0.0 33.5L230.0 33.5" stroke="#8c0000" stroke-width="1"/><path d="M0.0 53.5L230.0 53.5" stroke="#8c0000" stroke-width="1"/><path d="M0.0 59.5L230.0 59.5" stroke="#8c0000" stroke-width="1"/><path d="M0.0 67.5L230.0 67.5" stroke="#8c0000" stroke-width="1"/><path d="M0.0 71.5L230.0 71.5" stroke="#8c0000" stroke-width="1"/><path d="M0.0 93.5L230.0 93.5" stroke="#8c0000" stroke-width="1"/><path d="M0.0 122.5L230.0 122.5" stroke="#8c0000" stroke-width="1"/><path d="M0.0 8.5L230.0 8.5" stroke="#8c0000" stroke-width="1"/><path d="M230.0 28.5L780.5 28.5" stroke="#8c0000" stroke-width="1"/><path d="M230.0 34.5L780.5 34.5" stroke="#8c0000" stroke-width="1"/><path d="M23.5 0.0L23.5 104.0" stroke="#c8c8c8" stroke-width="3"/><path d="M92.5 0.0L92.5 104.0" stroke="#c8c8c8" stroke-width="3"/><path d="M161.5 0.0L161.5 104.0" stroke="#c8c8c8" stroke-width="3"/><path d="M230.5 0.0L230.5 104.0" stroke="#c8c8c8" stroke-width="3"/><path d="M22.0 34.8L232.0 34.8" stroke="#c8c8c8" stroke-width="3"/><path d="M22.0 102.8L232.0 102.8" stroke="#c8c8c8" stroke-width="3"/><path d="M93.0 35.0L161.0 102.0" stroke="#c8c8c8" stroke-width="3.5"/><path d="M22.5 0.0L22.5 156.0" stroke="#ff0000" stroke-width="1"/><path d="M90.5 0.0L90.5 156.0" stroke="#ff0000" stroke-width="1"/><path d="M160.5 0.0L160.5 156.0" stroke="#ff0000" stroke-width="1"/><path d="M228.5 0.0L228.5 156.0" stroke="#ff0000" stroke-width="1"/><path d="M0.0 46.5L160.0 46.5" stroke="#ff0000" stroke-width="1"/><path d="M230.0 46.5L780.5 46.5" stroke="#ff0000" stroke-width="1"/><path d="M0.0 102.5L780.5 102.5" stroke="#ff0000" stroke-width="1"/><path d="M0.0 127.5L160.0 127.5" stroke="#ff0000" stroke-width="1"/><path d="M196.0 127.5L780.5 127.5" stroke="#ff0000" stroke-width="1"/><path d="M136.0 28.5L230.0 28.5" stroke="#008000" stroke-width="1"/><path d="M160.0 46.5L230.0 46.5" stroke="#008000" stroke-width="1"/><path d="M160.0 127.5L198.0 127.5" stroke="#008000" stroke-width="1"/><path d="M166.5 14.0L166.5 156.0" stroke="#008000" stroke-width="1"/><path d="M298.5 0.0L298.5 156.0" stroke="#ff0000" stroke-width="1"/><path d="M367.5 0.0L367.5 156.0" stroke="#ff0000" stroke-width="1"/><path d="M436.5 0.0L436.5 156.0" stroke="#ff0000" stroke-width="1"/><path d="M441.5 0.0L441.5 156.0" stroke="#d00000" stroke-width="1"/><path d="M473.5 0.0L473.5 156.0" stroke="#ff0000" stroke-width="1"/><path d="M573.5 0.0L573.5 156.0" stroke="#ff0000" stroke-width="1"/><path d="M586.5 0.0L586.5 156.0" stroke="#d00000" stroke-width="1"/><path d="M642.5 0.0L642.5 156.0" stroke="#ff0000" stroke-width="1"/><path d="M711.5 0.0L711.5 156.0" stroke="#ff0000" stroke-width="1"/><path d="M780.5 0.0L780.5 156.0" stroke="#ff0000" stroke-width="1"/><path d="M186 58L229.5 102L186 145.5L142.5 102Z" fill="none" stroke="#ff0000"/><path d="M230.0 13.0L273.5 58.0" stroke="#008000" stroke-width="1"/><path d="M268.0 58.0L279.0 58.0" stroke="#008000" stroke-width="1"/><path d="M305.0 27.0L230.0 102.0" stroke="#008000" stroke-width="1"/><path d="M230.0 102.0L288.0 159.0" stroke="#008000" stroke-width="1"/><path d="M230.0 13.0L186.0 58.0" stroke="#008000" stroke-width="1"/><path d="M230.0 13.0L248.0 -5.0" stroke="#008000" stroke-width="1"/><path d="M186.0 145.5L201.0 160.0" stroke="#008000" stroke-width="1"/><rect x="21.5" y="96" width="3" height="9" fill="#7a00ff"/><rect x="24.5" y="101.5" width="4" height="3.5" fill="#7a00ff"/><rect x="90" y="96" width="4.5" height="6" fill="#7a00ff"/><rect x="90" y="101" width="7" height="3.5" fill="#7a00ff"/><rect x="159" y="96" width="4" height="9" fill="#7a00ff"/><rect x="159" y="101" width="7" height="4" fill="#7a00ff"/><rect x="226.5" y="96" width="4.5" height="9" fill="#7a00ff"/><rect x="222.5" y="101" width="8" height="4" fill="#7a00ff"/><rect x="359.5" y="119.5" width="16.5" height="16.5" fill="#8000ff"/><rect x="634.5" y="119.5" width="16.5" height="16.5" fill="#8000ff"/><rect x="703.5" y="41.5" width="16.5" height="16" fill="#8000ff"/><rect x="712.5" y="35" width="7.5" height="7" fill="#8000ff"/><rect x="703.5" y="98" width="16.5" height="16" fill="#8000ff"/><rect x="712.5" y="91" width="7.5" height="7.5" fill="#8000ff"/><path d="M365 41h4v4h4v4h-8z" fill="#c000c0"/><path d="M367.5 114.0L367.5 139.0" stroke="#ff0000" stroke-width="1"/><path d="M356.0 127.5L378.0 127.5" stroke="#ff0000" stroke-width="1"/><path d="M642.5 114.0L642.5 139.0" stroke="#ff0000" stroke-width="1"/><path d="M631.0 127.5L654.0 127.5" stroke="#ff0000" stroke-width="1"/><path d="M711.5 34.0L711.5 59.0" stroke="#ff0000" stroke-width="1"/><path d="M701.0 46.5L722.0 46.5" stroke="#ff0000" stroke-width="1"/><path d="M711.5 89.0L711.5 116.0" stroke="#ff0000" stroke-width="1"/><path d="M701.0 102.5L722.0 102.5" stroke="#ff0000" stroke-width="1"/><path d="M436.0 45.5L473.5 45.5" stroke="#f0d8d8" stroke-width="1.2"/><path d="M436.0 48.0L473.5 48.0" stroke="#f0d8d8" stroke-width="1.2"/><path d="M643 26h6v17h-13v-7h7z" fill="#1e78e6" stroke="#fff" stroke-width=".8" stroke-dasharray="2 1.500"/><circle cx="22.5" cy="13.0" r="12.3" fill="none" stroke="#008000" stroke-width="1"/><text x="22.5" y="18.0" text-anchor="middle" font-size="13" fill="#b8b8b8">5</text><circle cx="92.0" cy="13.0" r="12.3" fill="none" stroke="#008000" stroke-width="1"/><text x="92.0" y="18.0" text-anchor="middle" font-size="13" fill="#b8b8b8">6</text><circle cx="161.5" cy="13.0" r="12.3" fill="none" stroke="#008000" stroke-width="1"/><text x="161.5" y="18.0" text-anchor="middle" font-size="13" fill="#b8b8b8">7</text><circle cx="230.0" cy="13.0" r="12.3" fill="none" stroke="#008000" stroke-width="1.6"/><text x="230.0" y="18.0" text-anchor="middle" font-size="14" fill="#909090">2</text><circle cx="298.5" cy="13.0" r="12.3" fill="none" stroke="#008000" stroke-width="1"/><text x="298.5" y="18.0" text-anchor="middle" font-size="14" fill="#d0d0d0">2</text><circle cx="367.5" cy="13.0" r="12.3" fill="none" stroke="#008000" stroke-width="1"/><text x="367.5" y="18.0" text-anchor="middle" font-size="14" fill="#d0d0d0">3</text><circle cx="436.5" cy="13.0" r="12.3" fill="none" stroke="#008000" stroke-width="1"/><text x="436.5" y="18.0" text-anchor="middle" font-size="14" fill="#d0d0d0">4</text><circle cx="573.5" cy="13.0" r="12.3" fill="none" stroke="#008000" stroke-width="1"/><text x="573.5" y="18.0" text-anchor="middle" font-size="14" fill="#d0d0d0">5</text><circle cx="642.5" cy="13.0" r="12.3" fill="none" stroke="#008000" stroke-width="1"/><text x="642.5" y="18.0" text-anchor="middle" font-size="14" fill="#d0d0d0">6</text><circle cx="711.5" cy="13.0" r="12.3" fill="none" stroke="#008000" stroke-width="1"/><text x="711.5" y="18.0" text-anchor="middle" font-size="14" fill="#d0d0d0">7</text><circle cx="780.5" cy="13.0" r="12.3" fill="none" stroke="#008000" stroke-width="1"/><text x="780.5" y="18.0" text-anchor="middle" font-size="14" fill="#d0d0d0">8</text><circle cx="305.0" cy="27.0" r="12.3" fill="none" stroke="#008000" stroke-width="1"/><text x="305.0" y="32.0" text-anchor="middle" font-size="14" fill="#c0c0c0">1</text><circle cx="12.5" cy="46.5" r="12.3" fill="none" stroke="#008000" stroke-width="1"/><text x="12.5" y="51.5" text-anchor="middle" font-size="15" fill="#d0d0d0">C</text><circle cx="122.5" cy="46.5" r="12.3" fill="none" stroke="#008000" stroke-width="1"/><text x="122.5" y="51.5" text-anchor="middle" font-size="15" fill="#d0d0d0">C</text><circle cx="12.5" cy="102.0" r="12.3" fill="none" stroke="#008000" stroke-width="1"/><text x="12.5" y="107.0" text-anchor="middle" font-size="15" fill="#d0d0d0">B</text><circle cx="122.5" cy="102.0" r="12.3" fill="none" stroke="#008000" stroke-width="1"/><text x="122.5" y="107.0" text-anchor="middle" font-size="15" fill="#d0d0d0">B</text><circle cx="12.5" cy="127.5" r="12.3" fill="none" stroke="#008000" stroke-width="1"/><text x="12.5" y="132.5" text-anchor="middle" font-size="15" fill="#d0d0d0">A</text><circle cx="122.5" cy="127.5" r="12.3" fill="none" stroke="#008000" stroke-width="1"/><text x="122.5" y="132.5" text-anchor="middle" font-size="15" fill="#d0d0d0">A</text><circle cx="181.0" cy="143.0" r="12.3" fill="none" stroke="#008000" stroke-width="1"/><text x="181.0" y="148.0" text-anchor="middle" font-size="14" fill="#d0d0d0">B</text><circle cx="270.0" cy="143.0" r="12.3" fill="none" stroke="#008000" stroke-width="1"/><text x="270.0" y="148.0" text-anchor="middle" font-size="14" fill="#d0d0d0">A</text><text transform="translate(213.0 156.0) rotate(-90)" font-size="15" fill="#d8d8d8">00</text><text transform="translate(213.0 133.0) rotate(-90)" font-size="15" fill="#d8d8d8">1200</text><text transform="translate(213.0 92.0) rotate(-90)" font-size="15" fill="#d8d8d8">2680</text><text transform="translate(213.0 52.0) rotate(-90)" font-size="15" fill="#b0b0b0">600</text><text transform="translate(213.0 51.0) rotate(-90)" font-size="15" fill="#b0b0b0">900</text><text transform="translate(213.0 23.0) rotate(-90)" font-size="15" fill="#d8d8d8">392</text><text transform="translate(183.0 75.0) rotate(-90)" font-size="14" fill="#c8c8c8">13600</text><text transform="translate(243.0 24.0) rotate(45)" font-size="15" fill="#d8d8d8">3000</text><path d="M55 58l4.500 12h-3v34h-3.500v-34h-3z" fill="#00ff00"/><path d="M55 103.5h37v-3.500l12 5l-12 4.500v-3h-37z" fill="#ff0000"/><text x="63" y="70" font-size="12" fill="#00c000">Y</text><text x="91" y="95" font-size="13" fill="#ff0000">X</text></svg>
<div class="tb" style="left:145px;top:324px;width:208px;height:25px;"></div>
<div class="grip" style="left:148px;top:328px;height:17px"></div>
<svg style="left:155px;top:328px" width="16" height="16" viewBox="0 0 16 16"><path d="M3.500 1v14M0 4.500h14" stroke="#e08080" stroke-width="2.400"/><path d="M7 7l7 7l-2.500.3l.5 1.500" fill="#fff" stroke="#5a6a8a" stroke-width=".9"/><path d="M7 7v8l2-1.500" fill="#fff" stroke="#5a6a8a" stroke-width=".9"/></svg>
<span class="t" style="left:175px;top:329px;">正交</span>
<div class="btnsel" style="left:203px;top:325px;width:75px;height:23px;"></div>
<svg style="left:206px;top:328px" width="16" height="16" viewBox="0 0 16 16"><path d="M2 0v12M0 7h9" stroke="#6a2a2a" stroke-width="1.100"/><path d="M5 5l2 3" stroke="#6a2a2a"/><path d="M5 11c0-2 2-3 4-2l2-3c1-1 2.500 0 2 1l1 .5c1 .5 1.500 2 1 3l-1 3c-.5 1.500-2 2-4 2H8c-2 0-3-2-3-4.500z" fill="#e8c060" stroke="#7a5a20" stroke-width=".8"/></svg>
<span class="t" style="left:226px;top:329px;">对象捕捉</span>
<div class="btnsel" style="left:277px;top:325px;width:76px;height:23px;"></div>
<svg style="left:282px;top:328px" width="16" height="16" viewBox="0 0 16 16"><path d="M1 1v6M15 1v6M1 4h14" stroke="#7a5a5a" stroke-width="1.100"/><rect x="2" y="8.500" width="12" height="7" fill="#111"/><text x="8" y="14.500" font-size="6.500" font-weight="bold" text-anchor="middle" fill="#fff" font-family="Liberation Sans,sans-serif">12</text></svg>
<span class="t" style="left:301px;top:329px;">动态输入</span>
<div class="tb" style="left:603px;top:324px;width:408px;height:25px;"></div>
<div class="grip" style="left:606px;top:328px;height:17px"></div>
<div class="a" style="left:609px;top:325px;width:58px;height:23px;background:#fff;"></div>
<span class="t" style="left:611px;top:329px;">不偏移</span>
<div class="arr" style="left:657px;top:335px;"></div>
<div class="sep" style="left:670px;top:328px;height:16px"></div>
<span class="t" style="left:674px;top:329px;color:#6a6a6a;font-size:13px;">X=</span>
<div class="a" style="left:693px;top:325px;width:58px;height:23px;background:#f6f6f6;border:1px solid #8a8a8a;box-sizing:border-box;"></div>
<span class="t" style="left:725px;top:329px;color:#6a6a6a;font-size:13px;">0</span>
<svg style="left:741px;top:329px" width="7" height="15" viewBox="0 0 7 15"><path d="M0 4.500L3 1.500L6 4.500zM0 10.500L3 13.500L6 10.500z" fill="#555"/></svg>
<span class="t" style="left:753px;top:329px;color:#6a6a6a;font-size:13px;">mm</span>
<span class="t" style="left:778px;top:329px;color:#6a6a6a;font-size:13px;">Y=</span>
<div class="a" style="left:797px;top:325px;width:57px;height:23px;background:#f6f6f6;border:1px solid #8a8a8a;box-sizing:border-box;"></div>
<span class="t" style="left:829px;top:329px;color:#6a6a6a;font-size:13px;">0</span>
<svg style="left:845px;top:329px" width="7" height="15" viewBox="0 0 7 15"><path d="M0 4.500L3 1.500L6 4.500zM0 10.500L3 13.500L6 10.500z" fill="#555"/></svg>
<span class="t" style="left:856px;top:329px;color:#6a6a6a;font-size:13px;">mm</span>
<div class="sep" style="left:882px;top:328px;height:16px"></div>
<div class="a" style="left:886px;top:331px;width:12px;height:12px;background:#fdfdfd;border:1px solid #8c8c8c;box-sizing:border-box;"></div>
<span class="t" style="left:905px;top:329px;">旋转</span>
<div class="a" style="left:934px;top:325px;width:67px;height:23px;background:#f6f6f6;border:1px solid #8a8a8a;box-sizing:border-box;"></div>
<span class="t" style="left:952px;top:329px;color:#6a6a6a;font-size:13px;">0.000</span>
<svg style="left:991px;top:329px" width="7" height="15" viewBox="0 0 7 15"><path d="M0 4.500L3 1.500L6 4.500zM0 10.500L3 13.500L6 10.500z" fill="#555"/></svg>
<span class="t" style="left:1005px;top:329px;color:#444;">°</span>
<div class="a" style="left:144px;top:350px;width:1222px;height:355px;background:#f0f0f0;"></div>
<svg style="left:145px;top:356px" width="11" height="11" viewBox="0 0 11 11"><rect x=".5" y=".5" width="9" height="9" fill="#fff" stroke="#333"/><path d="M1 1l8 8M9 1L1 9" stroke="#902020" stroke-width="1.100"/><path d="M0 10.500h5" stroke="#333"/></svg>
<div class="a" style="left:146px;top:369px;width:8px;height:332px;background-image:radial-gradient(#b8b8b8 1px,transparent 1.300px);background-size:4px 4px;"></div>
<div class="a" style="left:158px;top:356px;width:1208px;height:25px;background:linear-gradient(#fbfbfb,#f4f4f4);"></div>
<svg style="left:159px;top:360px" width="16" height="16" viewBox="0 0 16 16"><path d="M3 2v12" stroke="#b4bccc" stroke-width="2"/><path d="M13 2v12L5 8z" fill="#b4bccc"/></svg>
<svg style="left:184px;top:360px" width="16" height="16" viewBox="0 0 16 16"><path d="M11 2v12L4 8z" fill="#b4bccc"/></svg>
<svg style="left:207px;top:360px" width="16" height="16" viewBox="0 0 16 16"><path d="M5 2v12l7-6z" fill="#2a5ad8"/></svg>
<svg style="left:231px;top:360px" width="16" height="16" viewBox="0 0 16 16"><path d="M13 2v12" stroke="#2a5ad8" stroke-width="2"/><path d="M3 2v12l8-6z" fill="#2a5ad8"/></svg>
<div class="sep" style="left:253px;top:360px;height:16px"></div>
<svg style="left:258px;top:360px" width="16" height="16" viewBox="0 0 16 16"><path d="M8 2l5 5.500h-3V13H6V7.500H3z" fill="#c0c6d4"/></svg>
<svg style="left:282px;top:360px" width="16" height="16" viewBox="0 0 16 16"><path d="M8 14l5-5.500h-3V3H6v5.500H3z" fill="#3a6ae0"/></svg>
<div class="sep" style="left:305px;top:360px;height:16px"></div>
<svg style="left:311px;top:360px" width="16" height="16" viewBox="0 0 16 16"><path d="M1 1.500h5M1 1.500v13M1 14.500h5" fill="none" stroke="#b0b0b0" stroke-width="1.100"/><path d="M6 8h9M6 8l3-2.500M6 8l3 2.500" fill="none" stroke="#b0b0b0" stroke-width="1.100"/><rect x="10" y="6" width="5" height="4" fill="#f0f0f0" stroke="#b8b8b8"/></svg>
<span class="t" style="left:331px;top:361px;color:#8c8c8c;">插入</span>
<svg style="left:363px;top:360px" width="16" height="16" viewBox="0 0 16 16"><path d="M1 3.500h7M1 8h7M1 12.500h7" stroke="#b0b0b0" stroke-width="1.200"/><path d="M8 8h7M15 8l-3-2.500M15 8l-3 2.500" fill="none" stroke="#b0b0b0" stroke-width="1.100"/></svg>
<span class="t" style="left:382px;top:361px;color:#8c8c8c;">删除</span>
<svg style="left:414px;top:360px" width="16" height="16" viewBox="0 0 16 16"><path d="M1.500 2v13" stroke="#222" stroke-width="1.300"/><path d="M1 1.500h9" stroke="#222" stroke-width="1.200" stroke-dasharray="2 1.200"/><path d="M12 1.500l2.500 0M13.500 0l1.500 1.500l-1.500 1.500" fill="none" stroke="#c02020" stroke-width="1"/><path d="M4.500 15v-5M7 15v-5M9.500 15v-4M12 15v-3M14.500 15v-2" stroke="#555" stroke-width="1"/></svg>
<span class="t" style="left:433px;top:361px;">缩尺配筋</span>
<svg style="left:489px;top:360px" width="16" height="16" viewBox="0 0 16 16"><rect x="6" y="3.500" width="9.500" height="11" fill="#fff" stroke="#4a5a8a"/><rect x="6" y="3.500" width="9.500" height="2.500" fill="#5a7ad0"/><path d="M8 9h5M8 11.500h5" stroke="#8a8aa0"/><path d="M0 12l7-9l3 2l-5 9z" fill="#e8c060" stroke="#7a5a10" stroke-width=".8"/><path d="M1 12l6-6" stroke="#7a5a10" stroke-width=".6"/></svg>
<span class="t" style="left:508px;top:361px;">钢筋信息</span>
<svg style="left:563px;top:360px" width="16" height="16" viewBox="0 0 16 16"><rect x=".5" y="2.500" width="15" height="11" fill="#eaf0fc" stroke="#3a5aa0" stroke-width="1.100"/><rect x=".5" y="2.500" width="15" height="2.800" fill="#5a80d8"/><path d="M3 8.500h3v2.500H3zM8 9.500h5" fill="none" stroke="#3a5aa0" stroke-width="1"/></svg>
<span class="t" style="left:583px;top:361px;">钢筋图库</span>
<svg style="left:639px;top:360px" width="16" height="16" viewBox="0 0 16 16"><rect x=".5" y="2.500" width="11" height="10" fill="#fff" stroke="#5a6a9a"/><path d="M2.500 5h7M2.500 7.500h7M2.500 10h4" stroke="#7a8ab0"/><path d="M7 9.500h5.500V7l3.500 4l-3.500 4v-2.500H7z" fill="#2a5ad8" stroke="#1a3a9a" stroke-width=".6"/></svg>
<span class="t" style="left:658px;top:361px;">其他</span>
<div class="arr" style="left:685px;top:367px;"></div>
<span class="t" style="left:699px;top:361px;">关闭</span>
<div class="sep" style="left:731px;top:360px;height:16px"></div>
<span class="t" style="left:738px;top:361px;">单构件钢筋总重(kg)<span style="letter-spacing:2.500px"> : </span>297.92</span>
<div class="a" style="left:157px;top:383px;width:1209px;height:322px;border:1px solid #a8a8a8;box-sizing:border-box;background:#f0f0f0;"></div>
<div class="a" style="left:158px;top:384px;width:1189px;height:303px;overflow:hidden;background:#fff;"><div class="a" style="left:0px;top:0px;width:1190px;height:18px;background:linear-gradient(#ffffff,#ececec);border-bottom:1px solid #a0a0a0;box-sizing:border-box;"></div><div class="a" style="left:33px;top:0px;width:73px;height:18px;background:linear-gradient(#fde6b0,#f5b64a);"></div><div class="a" style="left:32px;top:0px;width:1px;height:18px;background:#a8a8a8;"></div><span class="s" style="left:32px;width:73px;text-align:center;top:3px;color:#6a1060;">筋号</span><div class="a" style="left:105px;top:0px;width:1px;height:18px;background:#a8a8a8;"></div><span class="s" style="left:105px;width:57px;text-align:center;top:3px;">直径<span class="l">(</span>㎜<span class="l">)</span></span><div class="a" style="left:162px;top:0px;width:1px;height:18px;background:#a8a8a8;"></div><span class="s" style="left:162px;width:35px;text-align:center;top:3px;">级别</span><div class="a" style="left:197px;top:0px;width:1px;height:18px;background:#a8a8a8;"></div><span class="s" style="left:197px;width:33px;text-align:center;top:3px;">图号</span><div class="a" style="left:230px;top:0px;width:1px;height:18px;background:#a8a8a8;"></div><span class="s" style="left:230px;width:201px;text-align:center;top:3px;">图形</span><div class="a" style="left:431px;top:0px;width:1px;height:18px;background:#a8a8a8;"></div><span class="s" style="left:431px;width:166px;text-align:center;top:3px;">计算公式</span><div class="a" style="left:597px;top:0px;width:1px;height:18px;background:#a8a8a8;"></div><span class="s" style="left:597px;width:156px;text-align:center;top:3px;">公式描述</span><div class="a" style="left:753px;top:0px;width:1px;height:18px;background:#a8a8a8;"></div><span class="s" style="left:753px;width:61px;text-align:center;top:3px;">长度<span class="l">(</span>㎜<span class="l">)</span></span><div class="a" style="left:814px;top:0px;width:1px;height:18px;background:#a8a8a8;"></div><span class="s" style="left:814px;width:38px;text-align:center;top:3px;">根数</span><div class="a" style="left:852px;top:0px;width:1px;height:18px;background:#a8a8a8;"></div><span class="s" style="left:852px;width:39px;text-align:center;top:3px;">搭接</span><div class="a" style="left:891px;top:0px;width:1px;height:18px;background:#a8a8a8;"></div><span class="s" style="left:891px;width:49px;text-align:center;top:3px;">损耗<span class="l">(%)</span></span><div class="a" style="left:940px;top:0px;width:1px;height:18px;background:#a8a8a8;"></div><span class="s" style="left:940px;width:61px;text-align:center;top:3px;">单重<span class="l">(kg)</span></span><div class="a" style="left:1001px;top:0px;width:1px;height:18px;background:#a8a8a8;"></div><span class="s" style="left:1001px;width:61px;text-align:center;top:3px;">总重<span class="l">(kg)</span></span><div class="a" style="left:1062px;top:0px;width:1px;height:18px;background:#a8a8a8;"></div><span class="s" style="left:1062px;width:71px;text-align:center;top:3px;">钢筋归类</span><div class="a" style="left:1133px;top:0px;width:1px;height:18px;background:#a8a8a8;"></div><span class="s" style="left:1147px;top:3px;">搭接形式</span><div class="a" style="left:1188px;top:0px;width:1px;height:18px;background:#a8a8a8;"></div><div class="a" style="left:0px;top:18px;width:33px;height:285px;background:#fff;"></div><div class="a" style="left:33px;top:18px;width:1158px;height:285px;background:#ccffd9;"></div><span class="s" style="left:0;width:25px;text-align:center;top:29px"><span class="l">5</span></span><span class="s" style="left:34px;top:29px;">箍筋<span class="l">.1</span></span><span class="s" style="left:107px;top:29px;"><span class="l">12</span></span><span class="s" style="left:199px;top:29px;"><span class="l">195</span></span><svg style="left:175px;top:30px" width="9" height="10" viewBox="0 0 9 10"><ellipse cx="4.500" cy="4.500" rx="4" ry="2.600" fill="none" stroke="#000" stroke-width="1"/><path d="M4.500 0v9M1 9.500h7" stroke="#000" stroke-width="1"/></svg><span class="s" style="left:285px;top:30px"><span class="l">310</span></span><svg style="left:312px;top:25px" width="35" height="23" viewBox="0 0 35 23"><rect x="1" y="1" width="33" height="21" rx="1" fill="none" stroke="#000" stroke-width="1.800"/><path d="M23 12l10-11M28 13l6-7" stroke="#000" stroke-width="1.800"/></svg><span class="s" style="left:314px;top:33px;color:#e00000"><span class="l">810</span></span><span class="s" style="left:433px;top:29px;"><span class="l">2*(810+310)+2*(11.9*d)</span></span><span class="s" style="left:755px;top:29px;"><span class="l">2526</span></span><span class="s" style="left:816px;top:29px;"><span class="l">15</span></span><span class="s" style="left:854px;top:29px;"><span class="l">0</span></span><span class="s" style="left:893px;top:29px;"><span class="l">0</span></span><span class="s" style="left:942px;top:29px;"><span class="l">2.243</span></span><span class="s" style="left:1003px;top:29px;"><span class="l">33.646</span></span><span class="s" style="left:1064px;top:29px;">箍筋</span><span class="s" style="left:1135px;top:29px;">绑扎</span><div class="a" style="left:0px;top:52px;width:1190px;height:1px;background:#b4b4b4;"></div><span class="s" style="left:0;width:25px;text-align:center;top:63px"><span class="l">6</span></span><span class="s" style="left:34px;top:63px;">箍筋<span class="l">.2</span></span><span class="s" style="left:107px;top:63px;"><span class="l">12</span></span><span class="s" style="left:199px;top:63px;"><span class="l">195</span></span><svg style="left:175px;top:64px" width="9" height="10" viewBox="0 0 9 10"><ellipse cx="4.500" cy="4.500" rx="4" ry="2.600" fill="none" stroke="#000" stroke-width="1"/><path d="M4.500 0v9M1 9.500h7" stroke="#000" stroke-width="1"/></svg><span class="s" style="left:285px;top:64px"><span class="l">310</span></span><svg style="left:312px;top:59px" width="35" height="23" viewBox="0 0 35 23"><rect x="1" y="1" width="33" height="21" rx="1" fill="none" stroke="#000" stroke-width="1.800"/><path d="M23 12l10-11M28 13l6-7" stroke="#000" stroke-width="1.800"/></svg><span class="s" style="left:314px;top:67px;color:#e00000"><span class="l">610</span></span><span class="s" style="left:433px;top:63px;"><span class="l">2*(610+310)+2*(11.9*d)</span></span><span class="s" style="left:755px;top:63px;"><span class="l">2126</span></span><span class="s" style="left:816px;top:63px;"><span class="l">15</span></span><span class="s" style="left:854px;top:63px;"><span class="l">0</span></span><span class="s" style="left:893px;top:63px;"><span class="l">0</span></span><span class="s" style="left:942px;top:63px;"><span class="l">1.888</span></span><span class="s" style="left:1003px;top:63px;"><span class="l">28.318</span></span><span class="s" style="left:1064px;top:63px;">箍筋</span><span class="s" style="left:1135px;top:63px;">绑扎</span><div class="a" style="left:0px;top:86px;width:1190px;height:1px;background:#b4b4b4;"></div><span class="s" style="left:0;width:25px;text-align:center;top:97px"><span class="l">7</span></span><span class="s" style="left:34px;top:97px;">箍筋<span class="l">.3</span></span><span class="s" style="left:107px;top:97px;"><span class="l">12</span></span><span class="s" style="left:199px;top:97px;"><span class="l">195</span></span><svg style="left:175px;top:98px" width="9" height="10" viewBox="0 0 9 10"><ellipse cx="4.500" cy="4.500" rx="4" ry="2.600" fill="none" stroke="#000" stroke-width="1"/><path d="M4.500 0v9M1 9.500h7" stroke="#000" stroke-width="1"/></svg><span class="s" style="left:285px;top:98px"><span class="l">209</span></span><svg style="left:312px;top:93px" width="35" height="23" viewBox="0 0 35 23"><rect x="1" y="1" width="33" height="21" rx="1" fill="none" stroke="#000" stroke-width="1.800"/><path d="M23 12l10-11M28 13l6-7" stroke="#000" stroke-width="1.800"/></svg><span class="s" style="left:314px;top:101px;color:#e00000"><span class="l">310</span></span><span class="s" style="left:433px;top:97px;"><span class="l">2*(310+209)+2*(11.9*d)</span></span><span class="s" style="left:755px;top:97px;"><span class="l">1324</span></span><span class="s" style="left:816px;top:97px;"><span class="l">15</span></span><span class="s" style="left:854px;top:97px;"><span class="l">0</span></span><span class="s" style="left:893px;top:97px;"><span class="l">0</span></span><span class="s" style="left:942px;top:97px;"><span class="l">1.176</span></span><span class="s" style="left:1003px;top:97px;"><span class="l">17.636</span></span><span class="s" style="left:1064px;top:97px;">箍筋</span><span class="s" style="left:1135px;top:97px;">绑扎</span><div class="a" style="left:0px;top:120px;width:1190px;height:1px;background:#b4b4b4;"></div><span class="s" style="left:0;width:25px;text-align:center;top:128px"><span class="l">8</span></span><span class="s" style="left:34px;top:128px;">箍筋<span class="l">.4</span></span><span class="s" style="left:107px;top:128px;"><span class="l">12</span></span><span class="s" style="left:199px;top:128px;"><span class="l">485</span></span><svg style="left:175px;top:129px" width="9" height="10" viewBox="0 0 9 10"><ellipse cx="4.500" cy="4.500" rx="4" ry="2.600" fill="none" stroke="#000" stroke-width="1"/><path d="M4.500 0v9M1 9.500h7" stroke="#000" stroke-width="1"/></svg><svg style="left:266px;top:125px" width="134" height="24" viewBox="0 0 134 24"><path d="M16 20.500L1.500 2h131v8l-13.500 10.500" fill="none" stroke="#000" stroke-width="1.800" stroke-linejoin="round"/></svg><span class="s" style="left:320px;top:129px"><span class="l">610</span></span><span class="s" style="left:433px;top:128px;"><span class="l">610+2*(11.9*d)</span></span><span class="s" style="left:755px;top:128px;"><span class="l">896</span></span><span class="s" style="left:816px;top:128px;"><span class="l">15</span></span><span class="s" style="left:854px;top:128px;"><span class="l">0</span></span><span class="s" style="left:893px;top:128px;"><span class="l">0</span></span><span class="s" style="left:942px;top:128px;"><span class="l">0.796</span></span><span class="s" style="left:1003px;top:128px;"><span class="l">11.935</span></span><span class="s" style="left:1064px;top:128px;">箍筋</span><span class="s" style="left:1135px;top:128px;">绑扎</span><div class="a" style="left:0px;top:149px;width:1190px;height:1px;background:#b4b4b4;"></div><span class="s" style="left:0;width:25px;text-align:center;top:157px"><span class="l">9</span></span><span class="s" style="left:34px;top:157px;">箍筋<span class="l">.5</span></span><span class="s" style="left:107px;top:157px;"><span class="l">12</span></span><span class="s" style="left:199px;top:157px;"><span class="l">485</span></span><svg style="left:175px;top:158px" width="9" height="10" viewBox="0 0 9 10"><ellipse cx="4.500" cy="4.500" rx="4" ry="2.600" fill="none" stroke="#000" stroke-width="1"/><path d="M4.500 0v9M1 9.500h7" stroke="#000" stroke-width="1"/></svg><svg style="left:266px;top:154px" width="134" height="24" viewBox="0 0 134 24"><path d="M16 20.500L1.500 2h131v8l-13.500 10.500" fill="none" stroke="#000" stroke-width="1.800" stroke-linejoin="round"/></svg><span class="s" style="left:320px;top:158px"><span class="l">810</span></span><span class="s" style="left:433px;top:157px;"><span class="l">810+2*(11.9*d)</span></span><span class="s" style="left:755px;top:157px;"><span class="l">1096</span></span><span class="s" style="left:816px;top:157px;"><span class="l">15</span></span><span class="s" style="left:854px;top:157px;"><span class="l">0</span></span><span class="s" style="left:893px;top:157px;"><span class="l">0</span></span><span class="s" style="left:942px;top:157px;"><span class="l">0.973</span></span><span class="s" style="left:1003px;top:157px;"><span class="l">14.599</span></span><span class="s" style="left:1064px;top:157px;">箍筋</span><span class="s" style="left:1135px;top:157px;">绑扎</span><div class="a" style="left:0px;top:178px;width:1190px;height:1px;background:#b4b4b4;"></div><span class="s" style="left:0;width:25px;text-align:center;top:189px"><span class="l">10</span></span><span class="s" style="left:34px;top:189px;">其他箍筋<span class="l">.1</span></span><span class="s" style="left:107px;top:189px;"><span class="l">10</span></span><span class="s" style="left:199px;top:189px;"><span class="l">195</span></span><svg style="left:175px;top:190px" width="9" height="10" viewBox="0 0 9 10"><ellipse cx="4.500" cy="4.500" rx="4" ry="2.600" fill="none" stroke="#000" stroke-width="1"/><path d="M4.500 0v9M1 9.500h7" stroke="#000" stroke-width="1"/></svg><span class="s" style="left:285px;top:190px"><span class="l">810</span></span><svg style="left:312px;top:185px" width="35" height="23" viewBox="0 0 35 23"><rect x="1" y="1" width="33" height="21" rx="1" fill="none" stroke="#000" stroke-width="1.800"/><path d="M23 12l10-11M28 13l6-7" stroke="#000" stroke-width="1.800"/></svg><span class="s" style="left:314px;top:193px;color:#e00000"><span class="l">310</span></span><span class="s" style="left:433px;top:189px;"><span class="l">2*(310+810)+2*(11.9*d)</span></span><span class="s" style="left:755px;top:189px;"><span class="l">2478</span></span><span class="s" style="left:816px;top:189px;"><span class="l">15</span></span><span class="s" style="left:854px;top:189px;"><span class="l">0</span></span><span class="s" style="left:893px;top:189px;"><span class="l">0</span></span><span class="s" style="left:942px;top:189px;"><span class="l">1.529</span></span><span class="s" style="left:1003px;top:189px;"><span class="l">22.934</span></span><span class="s" style="left:1064px;top:189px;">箍筋</span><span class="s" style="left:1135px;top:189px;">绑扎</span><div class="a" style="left:0px;top:212px;width:1190px;height:1px;background:#b4b4b4;"></div><span class="s" style="left:0;width:25px;text-align:center;top:223px"><span class="l">11</span></span><span class="s" style="left:34px;top:223px;">其他箍筋<span class="l">.2</span></span><span class="s" style="left:107px;top:223px;"><span class="l">10</span></span><span class="s" style="left:199px;top:223px;"><span class="l">195</span></span><svg style="left:175px;top:224px" width="9" height="10" viewBox="0 0 9 10"><ellipse cx="4.500" cy="4.500" rx="4" ry="2.600" fill="none" stroke="#000" stroke-width="1"/><path d="M4.500 0v9M1 9.500h7" stroke="#000" stroke-width="1"/></svg><span class="s" style="left:285px;top:224px"><span class="l">209</span></span><svg style="left:312px;top:219px" width="35" height="23" viewBox="0 0 35 23"><rect x="1" y="1" width="33" height="21" rx="1" fill="none" stroke="#000" stroke-width="1.800"/><path d="M23 12l10-11M28 13l6-7" stroke="#000" stroke-width="1.800"/></svg><span class="s" style="left:314px;top:227px;color:#e00000"><span class="l">310</span></span><span class="s" style="left:433px;top:223px;"><span class="l">2*(310+209)+2*(11.9*d)</span></span><span class="s" style="left:755px;top:223px;"><span class="l">1276</span></span><span class="s" style="left:816px;top:223px;"><span class="l">15</span></span><span class="s" style="left:854px;top:223px;"><span class="l">0</span></span><span class="s" style="left:893px;top:223px;"><span class="l">0</span></span><span class="s" style="left:942px;top:223px;"><span class="l">0.787</span></span><span class="s" style="left:1003px;top:223px;"><span class="l">11.809</span></span><span class="s" style="left:1064px;top:223px;">箍筋</span><span class="s" style="left:1135px;top:223px;">绑扎</span><div class="a" style="left:0px;top:246px;width:1190px;height:1px;background:#b4b4b4;"></div><span class="s" style="left:0;width:25px;text-align:center;top:254px"><span class="l">12</span></span><span class="s" style="left:34px;top:254px;">其他箍筋<span class="l">.3</span></span><span class="s" style="left:107px;top:254px;"><span class="l">10</span></span><span class="s" style="left:199px;top:254px;"><span class="l">485</span></span><svg style="left:175px;top:255px" width="9" height="10" viewBox="0 0 9 10"><ellipse cx="4.500" cy="4.500" rx="4" ry="2.600" fill="none" stroke="#000" stroke-width="1"/><path d="M4.500 0v9M1 9.500h7" stroke="#000" stroke-width="1"/></svg><svg style="left:266px;top:251px" width="134" height="24" viewBox="0 0 134 24"><path d="M16 20.500L1.500 2h131v8l-13.500 10.500" fill="none" stroke="#000" stroke-width="1.800" stroke-linejoin="round"/></svg><span class="s" style="left:320px;top:255px"><span class="l">610</span></span><span class="s" style="left:433px;top:254px;"><span class="l">610+2*(11.9*d)</span></span><span class="s" style="left:755px;top:254px;"><span class="l">848</span></span><span class="s" style="left:816px;top:254px;"><span class="l">15</span></span><span class="s" style="left:854px;top:254px;"><span class="l">0</span></span><span class="s" style="left:893px;top:254px;"><span class="l">0</span></span><span class="s" style="left:942px;top:254px;"><span class="l">0.523</span></span><span class="s" style="left:1003px;top:254px;"><span class="l">7.848</span></span><span class="s" style="left:1064px;top:254px;">箍筋</span><span class="s" style="left:1135px;top:254px;">绑扎</span><div class="a" style="left:0px;top:275px;width:1190px;height:1px;background:#b4b4b4;"></div><span class="s" style="left:0;width:25px;text-align:center;top:283px"><span class="l">13</span></span><span class="s" style="left:34px;top:283px;">其他箍筋<span class="l">.4</span></span><span class="s" style="left:107px;top:283px;"><span class="l">10</span></span><span class="s" style="left:199px;top:283px;"><span class="l">485</span></span><svg style="left:175px;top:284px" width="9" height="10" viewBox="0 0 9 10"><ellipse cx="4.500" cy="4.500" rx="4" ry="2.600" fill="none" stroke="#000" stroke-width="1"/><path d="M4.500 0v9M1 9.500h7" stroke="#000" stroke-width="1"/></svg><svg style="left:266px;top:280px" width="134" height="24" viewBox="0 0 134 24"><path d="M16 20.500L1.500 2h131v8l-13.500 10.500" fill="none" stroke="#000" stroke-width="1.800" stroke-linejoin="round"/></svg><span class="s" style="left:320px;top:284px"><span class="l">310</span></span><span class="s" style="left:433px;top:283px;"><span class="l">310+2*(11.9*d)</span></span><span class="s" style="left:755px;top:283px;"><span class="l">548</span></span><span class="s" style="left:816px;top:283px;"><span class="l">15</span></span><span class="s" style="left:854px;top:283px;"><span class="l">0</span></span><span class="s" style="left:893px;top:283px;"><span class="l">0</span></span><span class="s" style="left:942px;top:283px;"><span class="l">0.338</span></span><span class="s" style="left:1003px;top:283px;"><span class="l">5.072</span></span><span class="s" style="left:1064px;top:283px;">箍筋</span><span class="s" style="left:1135px;top:283px;">绑扎</span><div class="a" style="left:0px;top:303px;width:1190px;height:1px;background:#b4b4b4;"></div><div class="a" style="left:32px;top:18px;width:1px;height:285px;background:#b4b4b4;"></div><div class="a" style="left:105px;top:18px;width:1px;height:285px;background:#000;"></div><div class="a" style="left:106px;top:18px;width:1px;height:285px;background:#70a070;"></div><div class="a" style="left:162px;top:18px;width:1px;height:285px;background:#b4b4b4;"></div><div class="a" style="left:197px;top:18px;width:1px;height:285px;background:#b4b4b4;"></div><div class="a" style="left:230px;top:18px;width:1px;height:285px;background:#b4b4b4;"></div><div class="a" style="left:431px;top:18px;width:1px;height:285px;background:#b4b4b4;"></div><div class="a" style="left:597px;top:18px;width:1px;height:285px;background:#b4b4b4;"></div><div class="a" style="left:753px;top:18px;width:1px;height:285px;background:#b4b4b4;"></div><div class="a" style="left:814px;top:18px;width:1px;height:285px;background:#b4b4b4;"></div><div class="a" style="left:852px;top:18px;width:1px;height:285px;background:#b4b4b4;"></div><div class="a" style="left:891px;top:18px;width:1px;height:285px;background:#b4b4b4;"></div><div class="a" style="left:940px;top:18px;width:1px;height:285px;background:#b4b4b4;"></div><div class="a" style="left:1001px;top:18px;width:1px;height:285px;background:#b4b4b4;"></div><div class="a" style="left:1062px;top:18px;width:1px;height:285px;background:#b4b4b4;"></div><div class="a" style="left:1133px;top:18px;width:1px;height:285px;background:#b4b4b4;"></div><div class="a" style="left:1188px;top:18px;width:1px;height:285px;background:#b4b4b4;"></div></div>
<div class="a" style="left:1347px;top:384px;width:18px;height:303px;background:#f0f0f0;"></div>
<div class="a" style="left:1348px;top:501px;width:14px;height:119px;background:#cdcdcd;"></div>
<svg style="left:1351px;top:389px" width="9" height="6" viewBox="0 0 9 6"><path d="M.5 5.500l4-4l4 4" fill="none" stroke="#505050" stroke-width="1.500"/></svg>
<svg style="left:1351px;top:676px" width="9" height="6" viewBox="0 0 9 6"><path d="M.5 .5l4 4l4-4" fill="none" stroke="#505050" stroke-width="1.500"/></svg>
<div class="a" style="left:158px;top:687px;width:1190px;height:17px;background:#f0f0f0;"></div>
<div class="a" style="left:176px;top:689px;width:827px;height:13px;background:#cdcdcd;"></div>
<svg style="left:163px;top:691px" width="6" height="9" viewBox="0 0 6 9"><path d="M5.500 .5l-4 4l4 4" fill="none" stroke="#505050" stroke-width="1.500"/></svg>
<svg style="left:1335px;top:691px" width="6" height="9" viewBox="0 0 6 9"><path d="M.5 .5l4 4l-4 4" fill="none" stroke="#505050" stroke-width="1.500"/></svg>
<div class="a" style="left:0px;top:706px;width:1366px;height:22px;background:#f0f0f0;border-top:1px solid #d8d8d8;box-sizing:border-box;"></div>
<div class="a" style="left:0px;top:708px;width:145px;height:19px;background:#fcfcfc;border:1px solid #e2e2e2;box-sizing:border-box;"></div>
<span class="s" style="left:2px;top:712px"><span class="l" style="letter-spacing:-.3px;word-spacing:3px;">X=70009 Y=9523</span></span>
<div class="a" style="left:147px;top:708px;width:79px;height:19px;background:#fcfcfc;border:1px solid #e2e2e2;box-sizing:border-box;"></div>
<span class="s" style="left:151px;top:712px">层高<span class="l">:2.8m</span></span>
<div class="a" style="left:228px;top:708px;width:100px;height:19px;background:#fcfcfc;border:1px solid #e2e2e2;box-sizing:border-box;"></div>
<span class="s" style="left:232px;top:712px">底标高<span class="l">:13.07m</span></span>
<div class="a" style="left:330px;top:708px;width:46px;height:19px;background:#fcfcfc;border:1px solid #e2e2e2;box-sizing:border-box;"></div>
<span class="s" style="left:333px;top:712px"><span class="l">1(1)</span></span>
<div class="a" style="left:378px;top:708px;width:916px;height:19px;background:#fcfcfc;border:1px solid #e2e2e2;box-sizing:border-box;"></div>
<span class="s" style="left:382px;top:712px">按鼠标左键指定第一个角点，或拾取构件图元</span>
<div class="a" style="left:1296px;top:708px;width:70px;height:19px;background:#fcfcfc;border:1px solid #e2e2e2;box-sizing:border-box;"></div>
<span class="s" style="left:1299px;top:712px"><span class="l">494.2 FPS</span></span>
<div class="a" style="left:0px;top:728px;width:1366px;height:40px;background:#020b12;"></div>
<div class="a" style="left:0px;top:728px;width:48px;height:40px;background:#000;"></div>
<svg style="left:16px;top:740px" width="16" height="16" viewBox="0 0 16 16"><path d="M0 2.300l6.500-.9v6.100H0zM7.300 1.300L16 0v7.500H7.300zM0 8.300h6.500v6.100L0 13.500zM7.300 8.300H16V16l-8.700-1.300z" fill="#fff"/></svg>
<div class="a" style="left:48px;top:728px;width:344px;height:40px;background:#333;"></div>
<svg style="left:57px;top:737px" width="22" height="22" viewBox="0 0 22 22"><circle cx="11" cy="11" r="9.100" fill="none" stroke="#fafafa" stroke-width="2.800"/></svg>
<span class="t" style="left:84px;top:741px;color:#a4a4a4;font-size:14px;">在这里输入你要搜索的内容</span>
<svg style="left:365px;top:739px" width="12" height="18" viewBox="0 0 12 18"><rect x="3.500" y=".7" width="5" height="10" rx="2.500" fill="none" stroke="#c8c8c8" stroke-width="1.100"/><path d="M1 8c0 6 10 6 10 0M6 12.500v3M3.500 16.500h5" fill="none" stroke="#c8c8c8" stroke-width="1.100"/></svg>
<svg style="left:407px;top:736px" width="24" height="26" viewBox="0 0 24 26"><g fill="#ececec"><path d="M11.500 12.500C5 13 1 10 1.500 6C2 2 7 .5 10 3c2 2 2 6 1.500 9.500z"/><path d="M12.500 12.500C12 6 15 2 19 2.500c4 .5 5.500 5.500 3 8.500c-2 2-6 2-9.500 1.500z"/><path d="M12.500 13.500c6.500-.5 10.500 2.500 10 6.500c-.5 4-5.500 5.500-8.500 3c-2-2-2-6-1.500-9.500z"/><path d="M11.500 13.500c.5 6.500-2.500 10.500-6.500 10c-4-.5-5.500-5.500-3-8.500c2-2 6-2 9.500-1.500z"/></g></svg>
<svg style="left:457px;top:738px" width="20" height="20" viewBox="0 0 20 20"><path d="M17 6C13 0 2 2 2 10c0 8 11 10 14 4c2-5-4-8-7-5c-2 2-1 5 2 5" fill="none" stroke="#d8d8d8" stroke-width="1.600"/><path d="M4 5c3-4 9-4 12-1" fill="none" stroke="#d8d8d8" stroke-width="1.200"/></svg>
<svg style="left:510px;top:737px" width="22" height="22" viewBox="0 0 22 22"><path d="M1 11C2 3 8 0 13 1c6 1 8 6 8 11H8c0 4 6 6 12 3v5c-8 4-16 0-16-7c0-3 2-6 5-7c-4 0-7 2-8 5z" fill="#1e88e5"/><path d="M8 9h7c0-5-7-5-7 0z" fill="#020b12"/></svg>
<svg style="left:558px;top:736px" width="22" height="24" viewBox="0 0 22 24"><path d="M1 7h20l-1 16H2z" fill="#fff"/><path d="M7 7c0-7 8-7 8 0" fill="none" stroke="#fff" stroke-width="1.500"/><path d="M6 11h4.500v4H6zM11.500 11H16v4h-4.500zM6 16h4.500v4H6zM11.500 16H16v4h-4.500z" fill="#020b12"/></svg>
<svg style="left:607px;top:738px" width="23" height="20" viewBox="0 0 23 20"><path d="M0 1h8l2 2h13v16H0z" fill="#f7c64a"/><path d="M0 5h23v14H0z" fill="#fbe08a"/><path d="M5 12h13v7H5z" fill="#3a96e0"/><path d="M8 15h7v4H8z" fill="#fbe08a"/></svg>
<svg style="left:655px;top:736px" width="26" height="26" viewBox="0 0 26 26"><path d="M24 3c-3 2-6 1-9 0C8 1 2 6 2 13c0 6 5 11 11 11c7 0 11-5 10-11c-3 3-5 3-7 2c3 5-3 7-5 3c-2-4 1-8 5-8c4 0 6 1 8-7z" fill="#1e88e5"/></svg>
<div class="a" style="left:693px;top:728px;width:48px;height:40px;background:#2d3942;"></div>
<svg style="left:705px;top:737px" width="24" height="24" viewBox="0 0 24 24"><rect width="24" height="24" rx="4.500" fill="#1e96f0"/><path d="M12 5v14M5 12h14" stroke="#fff" stroke-width="2"/><circle cx="12" cy="6.500" r="2.200" fill="none" stroke="#fff" stroke-width="1.600"/><circle cx="6.500" cy="12" r="2.200" fill="none" stroke="#fff" stroke-width="1.600"/><circle cx="17.500" cy="12" r="2.200" fill="none" stroke="#fff" stroke-width="1.600"/><path d="M9 19h6" stroke="#fff" stroke-width="2"/></svg>
<svg style="left:754px;top:736px" width="24" height="26" viewBox="0 0 24 26"><rect x="0" y="1" width="24" height="24" rx="2" fill="#f29a2e"/><rect x="2" y="3" width="20" height="20" fill="#fbd38a"/><rect x="5" y="7" width="12" height="14" fill="#fff"/><path d="M7 10h8M7 13h8M7 16h6" stroke="#c87818" stroke-width="1.200"/><path d="M20 3l3 2l-9 13l-4 2l1-4z" fill="#e05a20"/></svg>
<svg style="left:802px;top:736px" width="26" height="26" viewBox="0 0 26 26"><circle cx="13" cy="13" r="11" fill="#3cc040"/><circle cx="13" cy="13" r="8" fill="#eaffea"/><path d="M8 13h11c0-7-11-7-11 1c0 6 7 7 10 4" fill="none" stroke="#3cc040" stroke-width="2.400"/><path d="M2 20C8 27 20 26 24 18" fill="none" stroke="#f0f0f0" stroke-width="1.400"/></svg>
<div class="a" style="left:648px;top:766px;width:40px;height:2px;background:#76b9ed;"></div>
<div class="a" style="left:693px;top:766px;width:48px;height:2px;background:#76b9ed;"></div>
<div class="a" style="left:746px;top:766px;width:43px;height:2px;background:#76b9ed;"></div>
<div class="a" style="left:795px;top:766px;width:31px;height:2px;background:#76b9ed;"></div>
<div class="a" style="left:828px;top:766px;width:6px;height:2px;background:#4a6e88;"></div>
<span class="t" style="left:1004px;top:732px;color:#fff;font-size:13px;">28%</span>
<span class="t" style="left:992px;top:750px;color:#fff;font-size:12px;">CPU使用</span>
<svg style="left:1058px;top:742px" width="14" height="9" viewBox="0 0 14 9"><path d="M1 8l6-6.500l6 6.500" fill="none" stroke="#fff" stroke-width="1.600"/></svg>
<svg style="left:1082px;top:740px" width="18" height="14" viewBox="0 0 18 14"><rect x="4.500" y="3.500" width="12" height="8" fill="none" stroke="#fff" stroke-width="1.200"/><rect x="6" y="5" width="7" height="5" fill="#fff"/><path d="M0 4h4M0 7h3M2 2v7" stroke="#fff" stroke-width="1.200"/></svg>
<svg style="left:1108px;top:739px" width="16" height="16" viewBox="0 0 16 16"><path d="M2 15C2 8 8 2 15 2M6 15c0-5 4-9 9-9M10 15c0-3 2-5 5-5" fill="none" stroke="#b8b8b8" stroke-width="1.400"/><circle cx="13.500" cy="13.500" r="1.500" fill="#fff"/></svg>
<svg style="left:1130px;top:739px" width="18" height="16" viewBox="0 0 18 16"><path d="M1 5.500h3l4-4v13l-4-4H1z" fill="none" stroke="#fff" stroke-width="1.200"/><path d="M10.500 5c1.500 1.500 1.500 4.500 0 6M13 3c2.500 2.500 2.500 7.500 0 10" fill="none" stroke="#fff" stroke-width="1.100"/><path d="M15.500 1.500c3 3.500 3 9.500 0 13" fill="none" stroke="#888" stroke-width="1"/></svg>
<svg style="left:1154px;top:741px" width="24" height="14" viewBox="0 0 24 14"><rect x=".7" y=".7" width="22.600" height="12.600" rx="1" fill="none" stroke="#fff" stroke-width="1.300"/><path d="M3 4h18M3 6.800h18" stroke="#fff" stroke-width="1.400" stroke-dasharray="1.500 1.200"/><path d="M6 10h12" stroke="#fff" stroke-width="1.400"/></svg>
<span class="t" style="left:1186px;top:740px;color:#fff;font-size:14px;font-weight:bold;">中</span>
<svg style="left:1213px;top:739px" width="18" height="18" viewBox="0 0 18 18"><path d="M3 3l11-2.500c1.500-.3 2.500.5 2.700 1.800l1 10c.2 1.300-.5 2.300-1.800 2.500l-11 2c-1.300.2-2.300-.5-2.500-1.800L1 5.500C.8 4.200 1.600 3.300 3 3z" fill="#f2571f"/><path d="M13 5.500c-2.500-1.300-7-1.200-7.500 1c-.4 2.500 7.500 2 7 5c-.3 2.500-5.500 2.300-8.500 1" fill="none" stroke="#fff" stroke-width="2" stroke-linecap="round"/></svg>
<span class="t" style="left:1261px;top:731px;color:#fff;font-size:13px;">18:18</span>
<span class="t" style="left:1247px;top:750px;color:#fff;font-size:13px;">2017/9/30</span>
<svg style="left:1325px;top:740px" width="18" height="17" viewBox="0 0 18 17"><path d="M1 1h16v11.500h-5l-3 3.500v-3.500H1z" fill="none" stroke="#fff" stroke-width="1.400"/></svg>
</body></html>
